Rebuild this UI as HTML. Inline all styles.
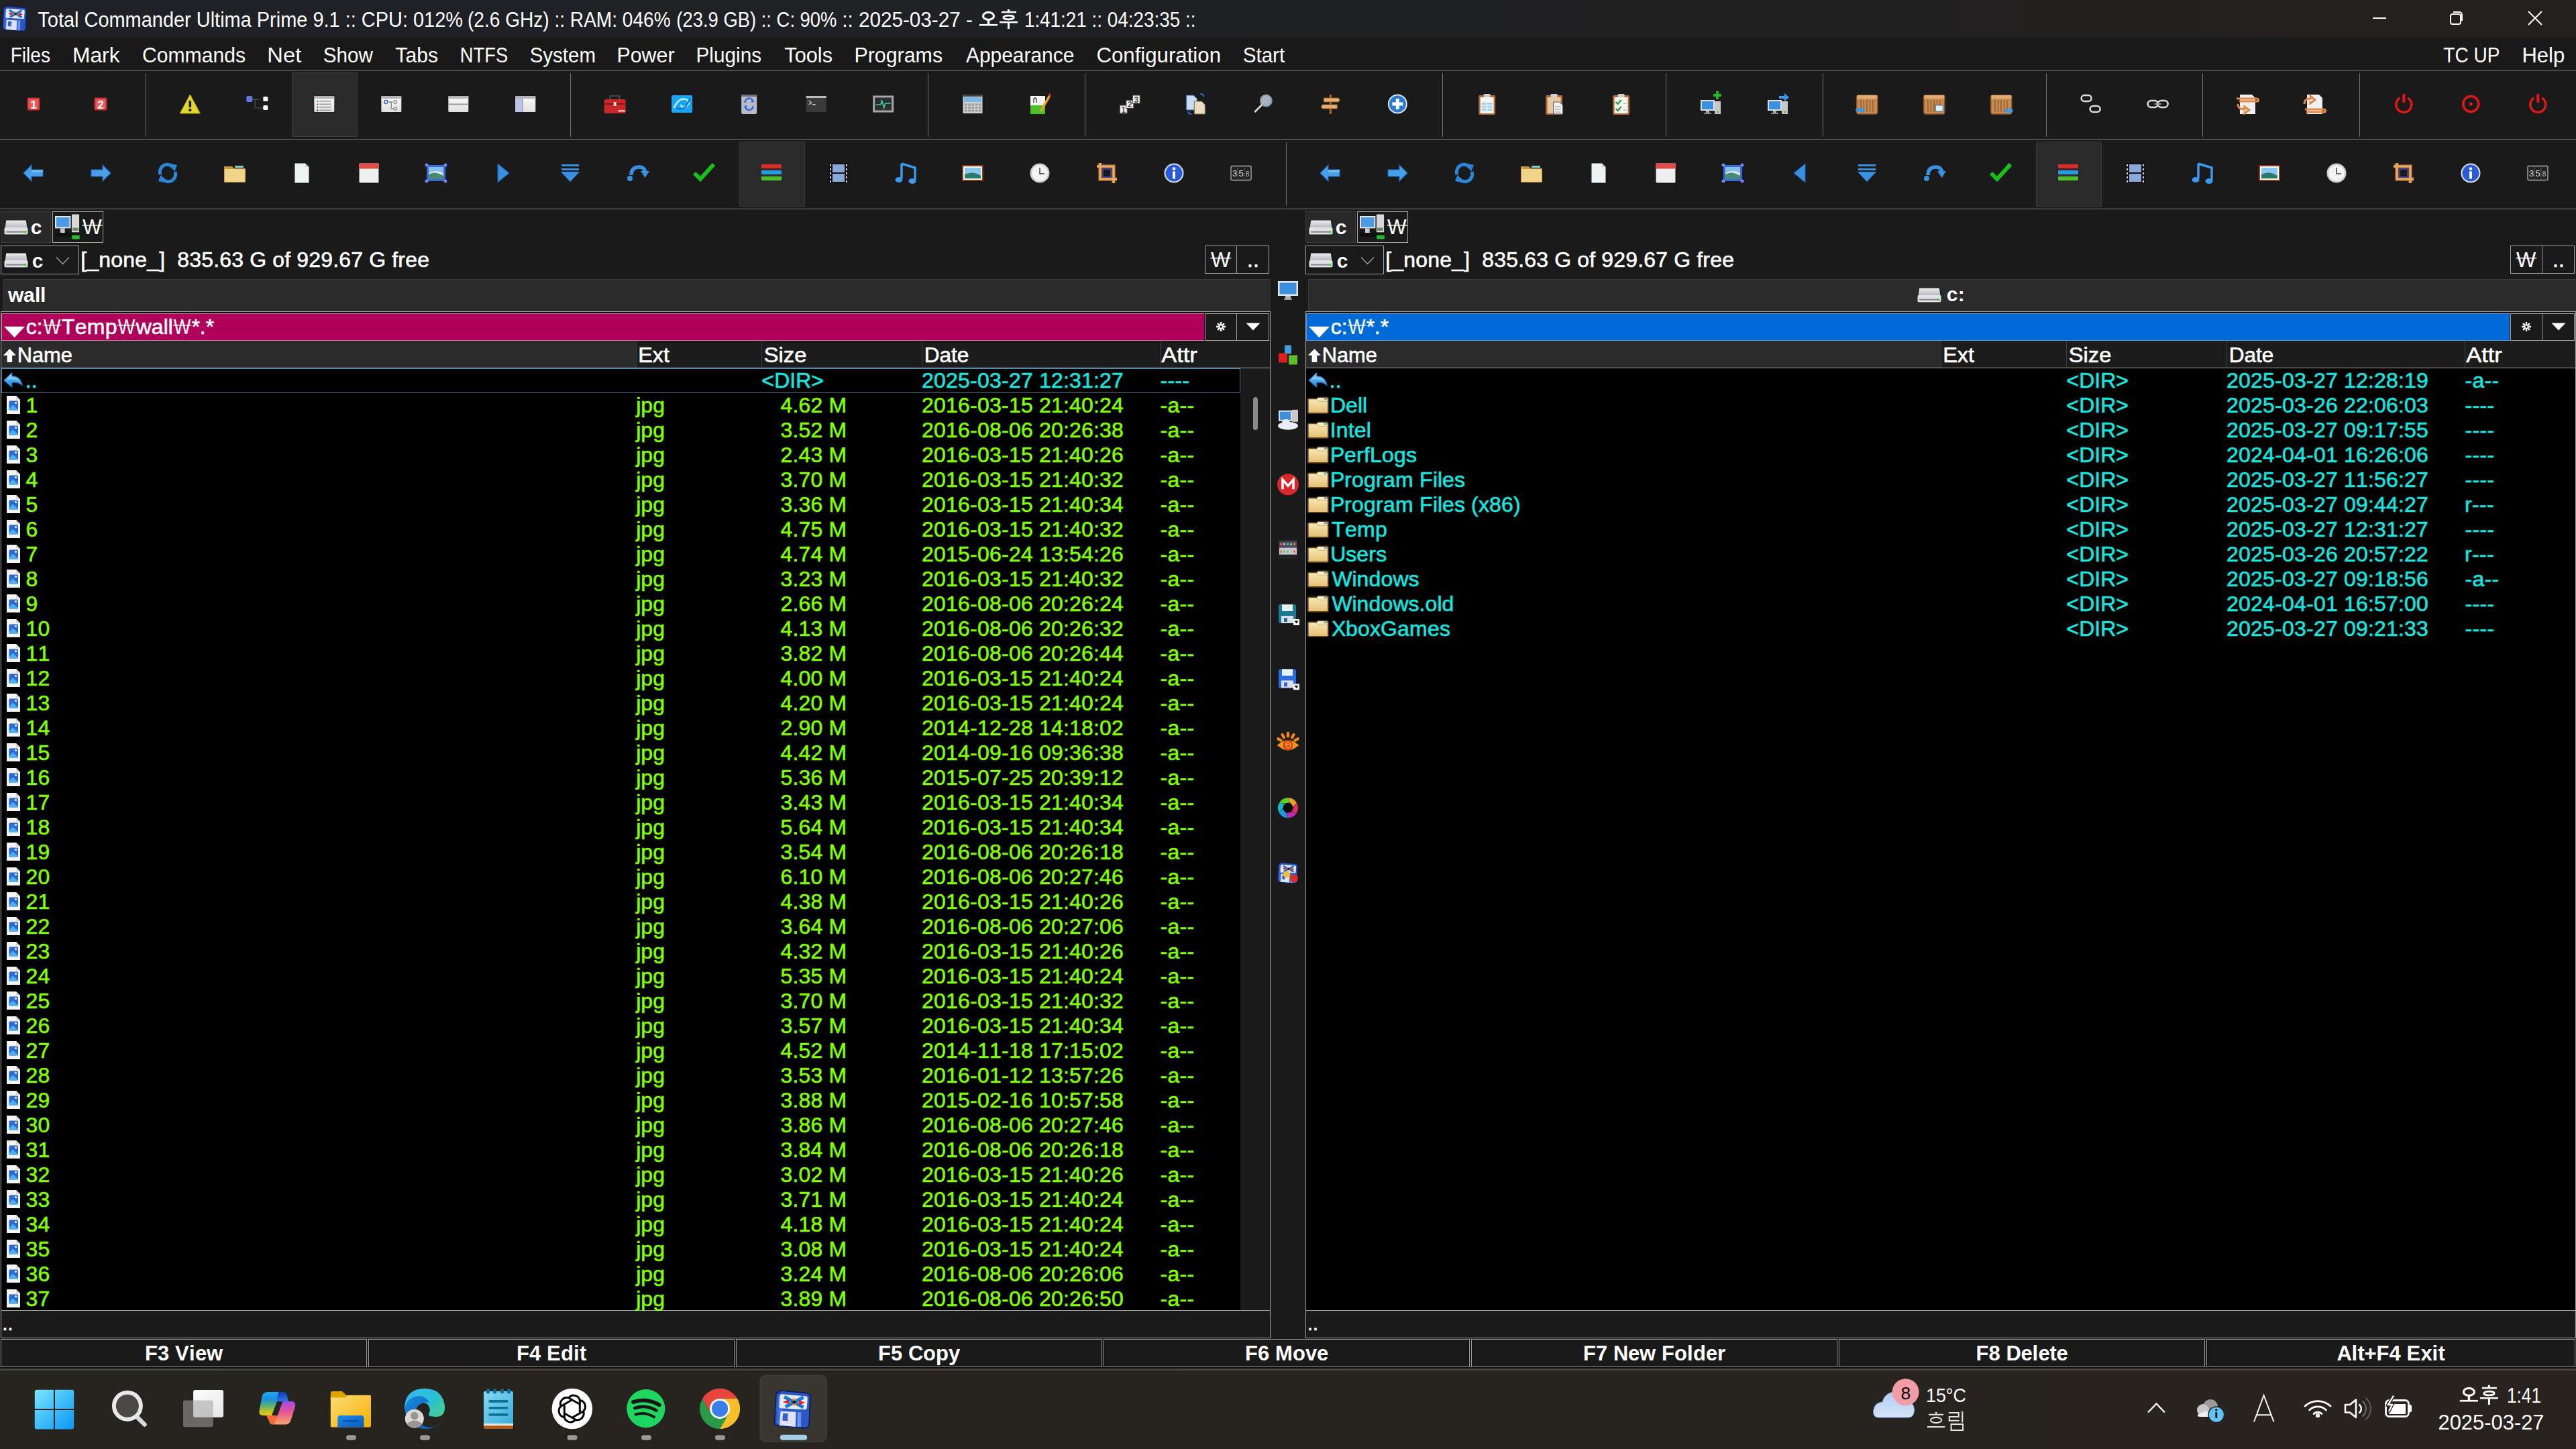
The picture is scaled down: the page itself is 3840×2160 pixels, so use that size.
<!DOCTYPE html><html><head><meta charset="utf-8"><style>html,body{margin:0;padding:0;background:#1a1a1a;overflow:hidden}svg{display:block}text{white-space:pre}</style></head><body>
<svg width="3840" height="2160" viewBox="0 0 3840 2160" shape-rendering="auto">
<defs>
<linearGradient id="tbg" x1="0" x2="1" y1="0" y2="0">
<stop offset="0" stop-color="#1f2127"/><stop offset="0.55" stop-color="#1f2022"/><stop offset="1" stop-color="#24201d"/></linearGradient>
<linearGradient id="fldg" x1="0" x2="0" y1="0" y2="1"><stop offset="0" stop-color="#f8e8b4"/><stop offset="1" stop-color="#e6c078"/></linearGradient>
<linearGradient id="upg" x1="0" x2="0" y1="0" y2="1"><stop offset="0" stop-color="#7acaf6"/><stop offset="1" stop-color="#1a86dc"/></linearGradient>
<linearGradient id="drvg" x1="0" x2="0" y1="0" y2="1"><stop offset="0" stop-color="#ececf0"/><stop offset="1" stop-color="#b4b4bc"/></linearGradient>
<linearGradient id="wing2" x1="0" x2="0" y1="0" y2="1"><stop offset="0" stop-color="#fbfbfb"/><stop offset="1" stop-color="#e0e0e0"/></linearGradient>
<linearGradient id="taskg" x1="0" x2="1" y1="0" y2="0">
<stop offset="0" stop-color="#26241f"/><stop offset="1" stop-color="#28231f"/></linearGradient>
</defs>
<rect x="0" y="0" width="3840" height="2160" fill="#1a1a1a" />
<rect x="0" y="0" width="3840" height="56" fill="url(#tbg)" />
<g transform="translate(3,9) scale(1.0555555555555556)"><path d="M5 1.5 Q5.5 0 8 0.3 L31 2.5 Q34.5 3 34.5 6.5 L33.5 31 Q33.3 35 29.5 35.5 L4.5 33.5 Q0.5 33 0.8 29 L2 5 Q2.3 1.5 5 1.5 Z" fill="#2c56c4" stroke="#0e1e58" stroke-width="1.2"/><path d="M4 6 L3 29 Q3 31 5 31.5 L8 32 L9 5 Z" fill="#4a7ae8" opacity=".6"/><path d="M8 3.5 L30.5 5.5 Q32 5.7 31.9 7.5 L31.3 16.5 Q31.2 18 29.5 18 L6.5 16.8 Q5 16.7 5.1 15 L5.7 5.5 Q5.8 3.4 8 3.5 Z" fill="#e6eaf6"/><path d="M10 6 L28 16 M28 6.5 L11 15.5" stroke="#1e78dc" stroke-width="3.2"/><path d="M8.5 11 L14 8.5 L15 13 Z M29.5 11.5 L24 14 L23.5 9 Z" fill="#dc2424"/><path d="M17 7.5 L21.5 7.8 L20 11 L22 14.5 L17.5 14.3 L18.8 11 Z" fill="#f2a020"/><circle cx="19.3" cy="11" r="1.6" fill="#181818"/><path d="M6.5 19.5 L21 20.3 L20.5 34.3 L5.3 33 Z" fill="#dce2f8"/><path d="M8.7 21.5 L13.5 21.8 L13 28.8 L8.2 28.4 Z" fill="#3460d0"/><path d="M22.5 20.4 L26 20.6 L25.6 34.6 L22 34.4 Z" fill="#6a94f2"/></g>
<text x="56.35" y="40" font-family="Liberation Sans" font-size="31" font-weight="normal" fill="#fff" text-anchor="start" textLength="633.67" lengthAdjust="spacingAndGlyphs" >Total Commander Ultima Prime 9.1 :: CPU: 012%</text>
<text x="696.96" y="40" font-family="Liberation Sans" font-size="31" font-weight="normal" fill="#fff" text-anchor="start" textLength="302.74" lengthAdjust="spacingAndGlyphs" >(2.6 GHz) :: RAM: 046%</text>
<text x="1008.3" y="40" font-family="Liberation Sans" font-size="31" font-weight="normal" fill="#fff" text-anchor="start" textLength="239.18" lengthAdjust="spacingAndGlyphs" >(23.9 GB) :: C: 90%</text>
<text x="1255.19" y="40" font-family="Liberation Sans" font-size="31" font-weight="normal" fill="#fff" text-anchor="start" textLength="194.73" lengthAdjust="spacingAndGlyphs" >:: 2025-03-27 -</text>
<g transform="translate(1459.9,13.8)"><ellipse cx="13.6" cy="10.1" rx="8.0" ry="5.5" fill="none" stroke="#fff" stroke-width="3.1"/><rect x="11.9" y="15.5" width="3.4" height="7" fill="#fff"/><rect x="0" y="22.1" width="27.1" height="2.6" fill="#fff"/><rect x="42" y="0" width="3.2" height="4" fill="#fff"/><rect x="33" y="3" width="22.1" height="2.5" fill="#fff"/><ellipse cx="43.6" cy="12.2" rx="7.9" ry="2.9" fill="none" stroke="#fff" stroke-width="2.6"/><rect x="30.1" y="18" width="27" height="2.6" fill="#fff"/><rect x="42.1" y="19" width="3" height="10.3" fill="#fff"/></g>
<text x="1526.88" y="40" font-family="Liberation Sans" font-size="31" font-weight="normal" fill="#fff" text-anchor="start" textLength="255.67" lengthAdjust="spacingAndGlyphs" >1:41:21 :: 04:23:35 ::</text>
<rect x="3537" y="26" width="20" height="2" fill="#fff" />
<g fill="none" stroke="#fff" stroke-width="2"><rect x="3653" y="21" width="15" height="15" rx="3"/><path d="M3657 18 h9 a4 4 0 0 1 4 4 v9"/></g>
<path d="M3769 17 L3789 37 M3789 17 L3769 37" stroke="#fff" stroke-width="2"/>
<rect x="0" y="56" width="3840" height="48" fill="#191919" />
<text x="15.7" y="93" font-family="Liberation Sans" font-size="31" font-weight="normal" fill="#fff" text-anchor="start" textLength="59.32" lengthAdjust="spacingAndGlyphs" >Files</text>
<text x="108.0" y="93" font-family="Liberation Sans" font-size="31" font-weight="normal" fill="#fff" text-anchor="start" textLength="70.56" lengthAdjust="spacingAndGlyphs" >Mark</text>
<text x="211.97" y="93" font-family="Liberation Sans" font-size="31" font-weight="normal" fill="#fff" text-anchor="start" textLength="154.12" lengthAdjust="spacingAndGlyphs" >Commands</text>
<text x="398.32" y="93" font-family="Liberation Sans" font-size="31" font-weight="normal" fill="#fff" text-anchor="start" textLength="50.92" lengthAdjust="spacingAndGlyphs" >Net</text>
<text x="481.65" y="93" font-family="Liberation Sans" font-size="31" font-weight="normal" fill="#fff" text-anchor="start" textLength="74.28" lengthAdjust="spacingAndGlyphs" >Show</text>
<text x="589.36" y="93" font-family="Liberation Sans" font-size="31" font-weight="normal" fill="#fff" text-anchor="start" textLength="63.68" lengthAdjust="spacingAndGlyphs" >Tabs</text>
<text x="685.75" y="93" font-family="Liberation Sans" font-size="31" font-weight="normal" fill="#fff" text-anchor="start" textLength="71.5" lengthAdjust="spacingAndGlyphs" >NTFS</text>
<text x="789.66" y="93" font-family="Liberation Sans" font-size="31" font-weight="normal" fill="#fff" text-anchor="start" textLength="98.28" lengthAdjust="spacingAndGlyphs" >System</text>
<text x="919.51" y="93" font-family="Liberation Sans" font-size="31" font-weight="normal" fill="#fff" text-anchor="start" textLength="85.99" lengthAdjust="spacingAndGlyphs" >Power</text>
<text x="1037.56" y="93" font-family="Liberation Sans" font-size="31" font-weight="normal" fill="#fff" text-anchor="start" textLength="97.51" lengthAdjust="spacingAndGlyphs" >Plugins</text>
<text x="1169.34" y="93" font-family="Liberation Sans" font-size="31" font-weight="normal" fill="#fff" text-anchor="start" textLength="71.72" lengthAdjust="spacingAndGlyphs" >Tools</text>
<text x="1273.51" y="93" font-family="Liberation Sans" font-size="31" font-weight="normal" fill="#fff" text-anchor="start" textLength="131.59" lengthAdjust="spacingAndGlyphs" >Programs</text>
<text x="1439.94" y="93" font-family="Liberation Sans" font-size="31" font-weight="normal" fill="#fff" text-anchor="start" textLength="161.39" lengthAdjust="spacingAndGlyphs" >Appearance</text>
<text x="1634.42" y="93" font-family="Liberation Sans" font-size="31" font-weight="normal" fill="#fff" text-anchor="start" textLength="185.61" lengthAdjust="spacingAndGlyphs" >Configuration</text>
<text x="1852.65" y="93" font-family="Liberation Sans" font-size="31" font-weight="normal" fill="#fff" text-anchor="start" textLength="62.56" lengthAdjust="spacingAndGlyphs" >Start</text>
<text x="3642.37" y="93" font-family="Liberation Sans" font-size="31" font-weight="normal" fill="#fff" text-anchor="start" textLength="84.11" lengthAdjust="spacingAndGlyphs" >TC UP</text>
<text x="3759.45" y="93" font-family="Liberation Sans" font-size="31" font-weight="normal" fill="#fff" text-anchor="start" textLength="63.85" lengthAdjust="spacingAndGlyphs" >Help</text>
<rect x="0" y="103" width="3840" height="1" fill="#0f0f0f"/>
<rect x="0" y="104" width="3840" height="1" fill="#9a9a9a"/>
<rect x="0" y="105" width="3840" height="1" fill="#0f0f0f"/>
<g transform="translate(50.0,155)"><rect x="-9.5" y="-9.5" width="19" height="19" rx="2" fill="#c42a2e"/><rect x="-7.5" y="-7.5" width="15" height="15" rx="1" fill="#ea5a5c"/><text x="0" y="6.5" font-family="Liberation Sans" font-weight="bold" font-size="17" fill="#fff" text-anchor="middle">1</text></g>
<g transform="translate(150.0,155)"><rect x="-9.5" y="-9.5" width="19" height="19" rx="2" fill="#c42a2e"/><rect x="-7.5" y="-7.5" width="15" height="15" rx="1" fill="#ea5a5c"/><text x="0" y="6.5" font-family="Liberation Sans" font-weight="bold" font-size="17" fill="#fff" text-anchor="middle">2</text></g>
<rect x="217" y="109" width="1" height="95" fill="#6e6e6e"/>
<g transform="translate(283.33,155)"><path d="M0 -14 L15 14 H-15 Z" fill="#e4d62a" stroke="#b8a818" stroke-width="1"/><rect x="-1.8" y="-5" width="3.6" height="10" fill="#222"/><circle cx="0" cy="9" r="2.2" fill="#222"/></g>
<g transform="translate(383.33,155)"><path d="M-10 -7 H4 M-3 -7 V6 H10" stroke="#3a3a3a" stroke-width="2" fill="none"/><rect x="-16" y="-12" width="9" height="9" rx="2" fill="#5a7ae0"/><rect x="9" y="-11" width="7" height="7" rx="1.5" fill="#fff"/><rect x="9" y="2" width="7" height="7" rx="1.5" fill="#fff"/></g>
<rect x="435.5" y="107.5" width="97" height="96" fill="#2a2a2a" stroke="#3a3a3a" stroke-width="1"/>
<g transform="translate(483.33,155)"><rect x="-15.5" y="-12.5" width="31" height="25" rx="2" fill="#111"/><rect x="-15" y="-12" width="30" height="24" rx="1.5" fill="url(#wing2)"/><rect x="-15" y="-12" width="30" height="4" rx="1" fill="#b4b4b4"/><rect x="-11" y="-5.0" width="2" height="2" fill="#2a9a2a"/><rect x="-7" y="-5.0" width="17" height="1.6" fill="#9a9a9a"/><rect x="-11" y="-0.5" width="2" height="2" fill="#c03030"/><rect x="-7" y="-0.5" width="17" height="1.6" fill="#9a9a9a"/><rect x="-11" y="4.0" width="2" height="2" fill="#3a6ad0"/><rect x="-7" y="4.0" width="17" height="1.6" fill="#9a9a9a"/><rect x="-11" y="8.5" width="2" height="2" fill="#333"/><rect x="-7" y="8.5" width="17" height="1.6" fill="#9a9a9a"/></g>
<g transform="translate(583.3299999999999,155)"><rect x="-15.5" y="-12.5" width="31" height="25" rx="2" fill="#111"/><rect x="-15" y="-12" width="30" height="24" rx="1.5" fill="url(#wing2)"/><rect x="-15" y="-12" width="30" height="4" rx="1" fill="#b4b4b4"/><circle cx="-8" cy="-3" r="2.5" fill="none" stroke="#3a6ad0" stroke-width="1.5"/><path d="M-4 -3 H2 M0 -3 V7 H4" stroke="#888" stroke-width="1.3" fill="none"/><circle cx="6" cy="-3" r="2.3" fill="none" stroke="#888" stroke-width="1.3"/><circle cx="6" cy="7" r="2.3" fill="none" stroke="#888" stroke-width="1.3"/></g>
<g transform="translate(683.3299999999999,155)"><rect x="-15.5" y="-12.5" width="31" height="25" rx="2" fill="#111"/><rect x="-15" y="-12" width="30" height="24" rx="1.5" fill="url(#wing2)"/><rect x="-15" y="-12" width="30" height="4" rx="1" fill="#b4b4b4"/><rect x="-15" y="-0.5" width="30" height="2" fill="#9a9a9a"/></g>
<g transform="translate(783.3299999999999,155)"><rect x="-15.5" y="-12.5" width="31" height="25" rx="2" fill="#111"/><rect x="-15" y="-12" width="30" height="24" rx="1.5" fill="url(#wing2)"/><rect x="-15" y="-12" width="30" height="4" rx="1" fill="#b4b4b4"/><rect x="-15" y="-8" width="10" height="20" fill="#b8c4e8"/><rect x="-5" y="-8" width="1.5" height="20" fill="#9a9a9a"/></g>
<rect x="850" y="109" width="1" height="95" fill="#6e6e6e"/>
<g transform="translate(916.66,155)"><path d="M-7 -7 V-12 H7 V-7" fill="none" stroke="#444" stroke-width="2.5"/><rect x="-16" y="-7" width="32" height="21" rx="2" fill="#c8282a"/><rect x="-16" y="-1" width="32" height="2" fill="#8a1818"/><rect x="-2" y="-3" width="4" height="6" fill="#ddd"/><rect x="5" y="9" width="10" height="2.5" fill="#fff" opacity=".7"/></g>
<g transform="translate(1016.66,155)"><rect x="-15.5" y="-13" width="31" height="26" rx="2" fill="#1aa4f4"/><path d="M-12 6 Q-4 -12 8 -6 Q14 0 4 4 Q-2 6 -1 1" fill="none" stroke="#c8f0ff" stroke-width="2.5"/><path d="M12 -8 Q4 12 -8 6" fill="none" stroke="#0a6ad0" stroke-width="2"/></g>
<g transform="translate(1116.6599999999999,155)"><rect x="-11.5" y="-14" width="23" height="29" rx="2" fill="#b8bcc8"/><rect x="-11.5" y="-14" width="23" height="3" fill="#6a6e7a"/><path d="M-6 -2 A6 6 0 0 1 6 -3 M6 3 A6 6 0 0 1 -6 3" fill="none" stroke="#3a6ae0" stroke-width="2.5"/><path d="M4 -7 l4 4 l-5 1 z M-4 7 l-4 -4 l5 -1 z" fill="#3a6ae0"/></g>
<g transform="translate(1216.6599999999999,155)"><rect x="-15" y="-12" width="30" height="24" fill="#3a3a3a"/><rect x="-15" y="-12" width="30" height="3" fill="#bbb"/><path d="M-11 -5 l4 3 l-4 3" fill="none" stroke="#ccc" stroke-width="1.4"/><rect x="-6" y="0" width="5" height="1.5" fill="#ccc"/></g>
<g transform="translate(1316.6599999999999,155)"><rect x="-15.5" y="-12.5" width="31" height="25" fill="#a8a8a8"/><rect x="-12.5" y="-9.5" width="25" height="19" fill="#2a2e30"/><path d="M-11 1 H-4 L-2 -5 L1 6 L3 -1 H11" fill="none" stroke="#3ad0a0" stroke-width="1.6"/></g>
<rect x="1383" y="109" width="1" height="95" fill="#6e6e6e"/>
<g transform="translate(1449.9899999999998,155)"><rect x="-14.5" y="-14" width="29" height="28" fill="#d0d0d0"/><rect x="-14.5" y="-14" width="29" height="3" fill="#444"/><rect x="-13" y="-10" width="26" height="7" fill="#7ab8e8"/><rect x="-12.0" y="-0.5" width="3.6" height="3" fill="#9a9a9a"/><rect x="-6.8" y="-0.5" width="3.6" height="3" fill="#9a9a9a"/><rect x="-1.5999999999999996" y="-0.5" width="3.6" height="3" fill="#9a9a9a"/><rect x="3.6000000000000014" y="-0.5" width="3.6" height="3" fill="#9a9a9a"/><rect x="8.8" y="-0.5" width="3.6" height="3" fill="#9a9a9a"/><rect x="-12.0" y="4.0" width="3.6" height="3" fill="#9a9a9a"/><rect x="-6.8" y="4.0" width="3.6" height="3" fill="#9a9a9a"/><rect x="-1.5999999999999996" y="4.0" width="3.6" height="3" fill="#9a9a9a"/><rect x="3.6000000000000014" y="4.0" width="3.6" height="3" fill="#9a9a9a"/><rect x="8.8" y="4.0" width="3.6" height="3" fill="#9a9a9a"/><rect x="-12.0" y="8.5" width="3.6" height="3" fill="#9a9a9a"/><rect x="-6.8" y="8.5" width="3.6" height="3" fill="#9a9a9a"/><rect x="-1.5999999999999996" y="8.5" width="3.6" height="3" fill="#9a9a9a"/><rect x="3.6000000000000014" y="8.5" width="3.6" height="3" fill="#9a9a9a"/><rect x="8.8" y="8.5" width="3.6" height="3" fill="#9a9a9a"/></g>
<g transform="translate(1549.9899999999998,155)"><path d="M-14 -12 H8 V15 H-14 Z" fill="#f4f4f4"/><path d="M-14 2 H8 V15 H-14 Z" fill="#4ac02a"/><path d="M-9 -2 V-8 Q-7 -10 -5 -8 V-2" fill="none" stroke="#333" stroke-width="1.3"/><path d="M0 10 L13 -13 L16 -11 L3 12 Z" fill="#e8a020"/><path d="M13 -13 L16 -11 L17 -14 L14 -16 Z" fill="#d03030"/></g>
<rect x="1617" y="109" width="1" height="95" fill="#6e6e6e"/>
<g transform="translate(1683.3199999999997,155)"><rect x="-14.0" y="2.0" width="11" height="12" fill="#f0f0f0" stroke="#444" stroke-width="1"/><text x="-8.5" y="12.5" font-family="Liberation Sans" font-size="12" font-weight="bold" fill="#555" text-anchor="middle">1</text><rect x="-4.5" y="-5.5" width="11" height="12" fill="#f0f0f0" stroke="#444" stroke-width="1"/><text x="1.0" y="5.0" font-family="Liberation Sans" font-size="12" font-weight="bold" fill="#555" text-anchor="middle">2</text><rect x="5.0" y="-13.0" width="11" height="12" fill="#f0f0f0" stroke="#444" stroke-width="1"/><text x="10.5" y="-2.5" font-family="Liberation Sans" font-size="12" font-weight="bold" fill="#555" text-anchor="middle">3</text></g>
<g transform="translate(1783.3199999999997,155)"><path d="M-15 -13 H-4 L1 -8 V9 H-15 Z" fill="#c8dcf4" stroke="#3a5aa0" stroke-width="1"/><path d="M-3 -4 H8 L13 1 V15 H-3 Z" fill="#e8dcc4" stroke="#8a6a3a" stroke-width="1"/><path d="M6 -15 Q11 -15 11 -11" fill="none" stroke="#3a6ae0" stroke-width="2"/><path d="M-12 11 Q-12 15 -7 15" fill="none" stroke="#3a6ae0" stroke-width="2"/></g>
<g transform="translate(1883.3199999999997,155)"><circle cx="4" cy="-5" r="8.5" fill="#a8b4c4" stroke="#8a94a0" stroke-width="2"/><path d="M-2 1 L-13 12" stroke="#ddd" stroke-width="2.5"/></g>
<g transform="translate(1983.3199999999997,155)"><rect x="-1.5" y="-14" width="3" height="29" fill="#a86a2a"/><path d="M-10 -9 H12 L14 -6 L12 -3 H-10 Z" fill="#e8b070" stroke="#8a5a20" stroke-width="1"/><path d="M10 1 H-12 L-14 4 L-12 7 H10 Z" fill="#e8b070" stroke="#8a5a20" stroke-width="1"/></g>
<g transform="translate(2083.3199999999997,155)"><circle r="14.5" fill="#d8e4f0"/><circle r="12.5" fill="#2a7ad0"/><rect x="-8" y="-2.5" width="16" height="5" fill="#fff"/><rect x="-2.5" y="-8" width="5" height="16" fill="#fff"/></g>
<rect x="2150" y="109" width="1" height="95" fill="#6e6e6e"/>
<g transform="translate(2216.6499999999996,155)"><rect x="-12.5" y="-13" width="25" height="29" rx="2" fill="#b06a30"/><rect x="-10" y="-10" width="20" height="24" fill="#f4f4f4"/><rect x="-5" y="-15" width="10" height="5" rx="1" fill="#ccc"/><rect x="-8" y="-2" width="16" height="12" fill="#a8d0f0"/><path d="M-8 2 H8 M-8 6 H8 M0 -2 V10" stroke="#fff" stroke-width="1"/></g>
<g transform="translate(2316.6499999999996,155)"><rect x="-12.5" y="-13" width="25" height="29" rx="2" fill="#b06a30"/><rect x="-10" y="-10" width="20" height="24" fill="#e8c8a0"/><rect x="-5" y="-15" width="10" height="5" rx="1" fill="#ccc"/><path d="M-1 -3 H8 L13 2 V15 H-1 Z" fill="#f4f4f4" stroke="#555" stroke-width="1"/><path d="M1 4 H10 M1 8 H10 M1 12 H10" stroke="#888" stroke-width="1"/></g>
<g transform="translate(2416.6499999999996,155)"><rect x="-12.5" y="-13" width="25" height="29" rx="2" fill="#b06a30"/><rect x="-10" y="-10" width="20" height="24" fill="#f4f4f4"/><rect x="-5" y="-15" width="10" height="5" rx="1" fill="#ccc"/><path d="M-8 -3 l3 3 l5 -6 M-8 7 l3 3 l5 -6" fill="none" stroke="#2aa02a" stroke-width="2.2"/><path d="M3 -1 H8 M3 9 H8" stroke="#999" stroke-width="1"/></g>
<rect x="2483" y="109" width="1" height="95" fill="#6e6e6e"/>
<g transform="translate(2549.9799999999996,155)"><g transform="scale(1.0)"><rect x="-15" y="-6" width="21" height="16" fill="#e0e0e0"/><rect x="-13" y="-4" width="17" height="12" fill="#3a90e0"/><rect x="-7" y="10" width="5" height="3" fill="#aaa"/><rect x="-10" y="13" width="11" height="2" fill="#888"/><rect x="6" y="-4" width="9" height="19" fill="#c8c8c8"/><rect x="9" y="11" width="3" height="2" fill="#3ac03a"/><rect x="4" y="-15" width="12" height="4" fill="#2ab02a"/><rect x="8" y="-19" width="4" height="12" fill="#2ab02a"/></g></g>
<g transform="translate(2649.9799999999996,155)"><g transform="scale(1.0)"><rect x="-15" y="-6" width="21" height="16" fill="#e0e0e0"/><rect x="-13" y="-4" width="17" height="12" fill="#3a90e0"/><rect x="-7" y="10" width="5" height="3" fill="#aaa"/><rect x="-10" y="13" width="11" height="2" fill="#888"/><rect x="6" y="-4" width="9" height="19" fill="#c8c8c8"/><rect x="9" y="11" width="3" height="2" fill="#3ac03a"/><path d="M2 -12 H10 V-16 L17 -10 L10 -4 V-8 H2 Z" fill="#3a9af0"/></g></g>
<rect x="2717" y="109" width="1" height="95" fill="#6e6e6e"/>
<g transform="translate(2783.3099999999995,155)"><rect x="-15.5" y="-13" width="31" height="28" rx="3" fill="#c88a50" stroke="#8a5a28" stroke-width="1.5"/><rect x="-15" y="-13" width="30" height="5" fill="#e0aa70"/><rect x="-10.0" y="-6" width="1.3" height="18" fill="#8a5a28"/><rect x="-5.5" y="-6" width="1.3" height="18" fill="#8a5a28"/><rect x="-1.0" y="-6" width="1.3" height="18" fill="#8a5a28"/><rect x="3.5" y="-6" width="1.3" height="18" fill="#8a5a28"/><rect x="8.0" y="-6" width="1.3" height="18" fill="#8a5a28"/><path d="M-17 7 H-9 V3 L-3 9 L-9 15 V11 H-17 Z" fill="#3a9af0"/></g>
<g transform="translate(2883.3099999999995,155)"><rect x="-15.5" y="-13" width="31" height="28" rx="3" fill="#c88a50" stroke="#8a5a28" stroke-width="1.5"/><rect x="-15" y="-13" width="30" height="5" fill="#e0aa70"/><rect x="-10.0" y="-6" width="1.3" height="18" fill="#8a5a28"/><rect x="-5.5" y="-6" width="1.3" height="18" fill="#8a5a28"/><rect x="-1.0" y="-6" width="1.3" height="18" fill="#8a5a28"/><rect x="3.5" y="-6" width="1.3" height="18" fill="#8a5a28"/><rect x="8.0" y="-6" width="1.3" height="18" fill="#8a5a28"/><rect x="2" y="2" width="11" height="9" fill="#dff0ff" stroke="#3a7ad0" stroke-width="1"/></g>
<g transform="translate(2983.3099999999995,155)"><rect x="-15.5" y="-13" width="31" height="28" rx="3" fill="#c88a50" stroke="#8a5a28" stroke-width="1.5"/><rect x="-15" y="-13" width="30" height="5" fill="#e0aa70"/><rect x="-10.0" y="-6" width="1.3" height="18" fill="#8a5a28"/><rect x="-5.5" y="-6" width="1.3" height="18" fill="#8a5a28"/><rect x="-1.0" y="-6" width="1.3" height="18" fill="#8a5a28"/><rect x="3.5" y="-6" width="1.3" height="18" fill="#8a5a28"/><rect x="8.0" y="-6" width="1.3" height="18" fill="#8a5a28"/><path d="M4 8 H12 V4 L18 10 L12 16 V12 H4 Z" fill="#3a9af0"/></g>
<rect x="3050" y="109" width="1" height="95" fill="#6e6e6e"/>
<g transform="translate(3116.6399999999994,155)"><rect x="-14" y="-13" width="15" height="9" rx="4.5" fill="none" stroke="#ddd" stroke-width="2.5"/><rect x="-1" y="3" width="15" height="9" rx="4.5" fill="none" stroke="#ddd" stroke-width="2.5"/></g>
<g transform="translate(3216.6399999999994,155)"><rect x="-15" y="-5" width="15" height="10" rx="5" fill="none" stroke="#ddd" stroke-width="2.5"/><rect x="0" y="-5" width="15" height="10" rx="5" fill="none" stroke="#ddd" stroke-width="2.5"/><rect x="-5" y="-1" width="10" height="2" fill="#999"/></g>
<rect x="3283" y="109" width="1" height="95" fill="#6e6e6e"/>
<g transform="translate(3349.9699999999993,155)"><path d="M-11 -14 H7 L12 -9 V15 H-11 Z" fill="#f0f0f0"/><path d="M-16 -8 H14 Q18 -8 16 -4 H-12" fill="none" stroke="#e0884a" stroke-width="3"/><path d="M-14 0 Q-14 8 -4 8 V4 L3 9 L-4 14 V11" fill="none" stroke="#e0884a" stroke-width="3"/></g>
<g transform="translate(3449.9699999999993,155)"><path d="M-11 -14 H7 L12 -9 V15 H-11 Z" fill="#f0f0f0"/><path d="M-15 0 Q-15 -8 -6 -8 V-12 L1 -6 L-6 -1 V-4" fill="none" stroke="#e0884a" stroke-width="3"/><path d="M-14 8 H14 Q18 8 16 12 H-12" fill="none" stroke="#e0884a" stroke-width="3"/></g>
<rect x="3517" y="109" width="1" height="95" fill="#6e6e6e"/>
<g transform="translate(3583.2999999999993,155)"><path d="M-6 -9 A11.5 11.5 0 1 0 6 -9" fill="none" stroke="#e01818" stroke-width="3.5"/><rect x="-2" y="-15" width="4" height="13" fill="#e01818"/></g>
<g transform="translate(3683.2999999999993,155)"><circle r="11.5" fill="none" stroke="#e01818" stroke-width="3.5"/><circle r="2.5" fill="#e01818"/></g>
<g transform="translate(3783.2999999999993,155)"><path d="M-6 -9 A11.5 11.5 0 1 0 6 -9" fill="none" stroke="#e01818" stroke-width="3.5"/><rect x="-2" y="-15" width="4" height="13" fill="#e01818"/></g>
<rect x="0" y="207" width="3840" height="1" fill="#0f0f0f"/>
<rect x="0" y="208" width="3840" height="1" fill="#9a9a9a"/>
<rect x="0" y="209" width="3840" height="1" fill="#0f0f0f"/>
<rect x="1102.5" y="211.5" width="97" height="96" fill="#2a2a2a" stroke="#3a3a3a" stroke-width="1"/>
<g transform="translate(50,258)"><path d="M-15 0 L-3 -12 V-5 H14 V5 H-3 V12 Z" fill="#4aa0e8" stroke="#1a6ab8" stroke-width="1.2"/><path d="M-3 -5 H14 V-1 H-3 Z" fill="#8ac8f8" opacity=".6"/></g>
<g transform="translate(150,258)"><g transform="scale(-1,1)"><path d="M-15 0 L-3 -12 V-5 H14 V5 H-3 V12 Z" fill="#4aa0e8" stroke="#1a6ab8" stroke-width="1.2"/></g></g>
<g transform="translate(250,258)"><path d="M-11 2 A11 11 0 0 1 9 -7" fill="none" stroke="#2a86d8" stroke-width="5"/><path d="M4 -14 L14 -12 L10 -2 Z" fill="#2a86d8"/><path d="M11 -2 A11 11 0 0 1 -9 7" fill="none" stroke="#2a86d8" stroke-width="5"/><path d="M-4 14 L-14 12 L-10 2 Z" fill="#2a86d8"/></g>
<g transform="translate(350,258)"><path d="M-16 -10 H-4 L-1 -7 H16 V14 H-16 Z" fill="#c89a40"/><rect x="-15" y="-6" width="30" height="19" rx="1" fill="#f0d48a"/><rect x="0" y="-11" width="13" height="3" fill="#7ad0c8"/></g>
<g transform="translate(450,258)"><path d="M-10.5 -14.5 H5 L10.5 -9 V14.5 H-10.5 Z" fill="#eef4f4"/><path d="M5 -14.5 V-9 H10.5" fill="#c8d0d0"/></g>
<g transform="translate(550,258)"><rect x="-14.5" y="-14.5" width="29" height="29" rx="1.5" fill="#f0f0f0" stroke="#8a7a70" stroke-width="1"/><rect x="-14.5" y="-14.5" width="29" height="8" fill="#e04a4a"/></g>
<g transform="translate(650,258)"><rect x="-14" y="-12" width="28" height="24" fill="#3a6ae0"/><rect x="-11" y="-9" width="22" height="18" fill="#d8e8f0"/><path d="M-11 9 V2 Q-2 -4 11 4 V9 Z" fill="#4a8a70"/><path d="M-11 -9 H11 V0 Q0 -6 -11 0 Z" fill="#8ac0e8"/><circle cx="-14" cy="-12" r="2.5" fill="#6a8af0"/><circle cx="14" cy="-12" r="2.5" fill="#6a8af0"/><circle cx="-14" cy="12" r="2.5" fill="#6a8af0"/><circle cx="14" cy="12" r="2.5" fill="#6a8af0"/></g>
<g transform="translate(750,258)"><path d="M-8 -14 L9 0 L-8 14 Z" fill="#3a90e0" stroke="#1a5aa8" stroke-width="1"/></g>
<g transform="translate(850,258)"><rect x="-13" y="-13" width="26" height="3" fill="#3a90e0"/><rect x="-13" y="-7" width="26" height="3" fill="#3a90e0"/><path d="M-14 -2 H14 L0 13 Z" fill="#3a90e0"/></g>
<g transform="translate(950,258)"><path d="M-9 3 Q-9 -9 3 -9 Q10 -9 12 -2" fill="none" stroke="#3a90e0" stroke-width="5.5"/><path d="M5 -3 L18 -3 L11.5 7 Z" fill="#3a90e0"/><circle cx="-11" cy="8" r="4" fill="#3a90e0"/></g>
<g transform="translate(1050,258)"><path d="M-15 0 L-6 9 L14 -13" fill="none" stroke="#1ac01a" stroke-width="6"/></g>
<g transform="translate(1150,258)"><rect x="-15" y="-13" width="30" height="6" rx="1" fill="#e02a2a"/><rect x="-15" y="-4" width="30" height="6" rx="1" fill="#2a9ae0"/><rect x="-15" y="5" width="30" height="6" rx="1" fill="#4ac02a"/></g>
<g transform="translate(1250,258)"><rect x="-14.5" y="-15" width="29" height="30" fill="#111"/><rect x="-9" y="-13" width="18" height="12" fill="#8aa8d8"/><rect x="-9" y="1" width="18" height="12" fill="#8aa8d8"/><rect x="-13" y="-13" width="2" height="3" fill="#ddd"/><rect x="11" y="-13" width="2" height="3" fill="#ddd"/><rect x="-13" y="-7" width="2" height="3" fill="#ddd"/><rect x="11" y="-7" width="2" height="3" fill="#ddd"/><rect x="-13" y="-1" width="2" height="3" fill="#ddd"/><rect x="11" y="-1" width="2" height="3" fill="#ddd"/><rect x="-13" y="5" width="2" height="3" fill="#ddd"/><rect x="11" y="5" width="2" height="3" fill="#ddd"/><rect x="-13" y="11" width="2" height="3" fill="#ddd"/><rect x="11" y="11" width="2" height="3" fill="#ddd"/></g>
<g transform="translate(1350,258)"><path d="M-6 -14 L14 -8 V10" fill="none" stroke="#3a9af0" stroke-width="3.5"/><path d="M-6 -14 V8" stroke="#3a9af0" stroke-width="3.5"/><ellipse cx="-10" cy="10" rx="5.5" ry="4" fill="#3a9af0"/><ellipse cx="10" cy="12" rx="5.5" ry="4" fill="#3a9af0"/></g>
<g transform="translate(1450,258)"><rect x="-16" y="-12" width="32" height="24" fill="#8a3a10"/><rect x="-14" y="-10" width="28" height="20" fill="#fff"/><rect x="-12" y="-8" width="24" height="16" fill="#8ac8f0"/><path d="M-12 8 V2 Q0 -4 12 4 V8 Z" fill="#2a7a6a"/></g>
<g transform="translate(1550,258)"><circle r="14.5" fill="#c8cccc"/><circle r="12" fill="#f4f4f4"/><path d="M0 -8 V1 H7" fill="none" stroke="#444" stroke-width="1.5"/></g>
<g transform="translate(1650,258)"><path d="M-10 -15 V9 H15 M-15 -10 H10 V15" fill="none" stroke="#7a4a1a" stroke-width="6"/><path d="M-10 -15 V9 H15 M-15 -10 H10 V15" fill="none" stroke="#e8a868" stroke-width="3.5"/><rect x="-6" y="-6" width="12" height="12" fill="none" stroke="#3a4ad0" stroke-width="1.5"/></g>
<g transform="translate(1750,258)"><circle r="14.5" fill="#d8e0f0"/><circle r="12.5" fill="#2a5ad8"/><circle cx="0" cy="-6.5" r="2.3" fill="#fff"/><rect x="-2" y="-2.5" width="4" height="11" fill="#fff"/></g>
<g transform="translate(1850,258)"><rect x="-15" y="-10.5" width="30" height="21" rx="1.5" fill="#222" stroke="#b0b0b0" stroke-width="1.3"/><path d="M-5 -8 V8 M5 -8 V8" stroke="#555" stroke-width="1"/><text x="-9.5" y="5" font-family="Liberation Sans" font-size="13" fill="#ddd" text-anchor="middle" transform="scale(1,1)">3</text><text x="0" y="5" font-family="Liberation Sans" font-size="13" fill="#ddd" text-anchor="middle">5</text><text x="9.5" y="5" font-family="Liberation Sans" font-size="10" fill="#bbb" text-anchor="middle">8</text></g>
<rect x="3035.5" y="211.5" width="97" height="96" fill="#2a2a2a" stroke="#3a3a3a" stroke-width="1"/>
<g transform="translate(1983,258)"><path d="M-15 0 L-3 -12 V-5 H14 V5 H-3 V12 Z" fill="#4aa0e8" stroke="#1a6ab8" stroke-width="1.2"/><path d="M-3 -5 H14 V-1 H-3 Z" fill="#8ac8f8" opacity=".6"/></g>
<g transform="translate(2083,258)"><g transform="scale(-1,1)"><path d="M-15 0 L-3 -12 V-5 H14 V5 H-3 V12 Z" fill="#4aa0e8" stroke="#1a6ab8" stroke-width="1.2"/></g></g>
<g transform="translate(2183,258)"><path d="M-11 2 A11 11 0 0 1 9 -7" fill="none" stroke="#2a86d8" stroke-width="5"/><path d="M4 -14 L14 -12 L10 -2 Z" fill="#2a86d8"/><path d="M11 -2 A11 11 0 0 1 -9 7" fill="none" stroke="#2a86d8" stroke-width="5"/><path d="M-4 14 L-14 12 L-10 2 Z" fill="#2a86d8"/></g>
<g transform="translate(2283,258)"><path d="M-16 -10 H-4 L-1 -7 H16 V14 H-16 Z" fill="#c89a40"/><rect x="-15" y="-6" width="30" height="19" rx="1" fill="#f0d48a"/><rect x="0" y="-11" width="13" height="3" fill="#7ad0c8"/></g>
<g transform="translate(2383,258)"><path d="M-10.5 -14.5 H5 L10.5 -9 V14.5 H-10.5 Z" fill="#eef4f4"/><path d="M5 -14.5 V-9 H10.5" fill="#c8d0d0"/></g>
<g transform="translate(2483,258)"><rect x="-14.5" y="-14.5" width="29" height="29" rx="1.5" fill="#f0f0f0" stroke="#8a7a70" stroke-width="1"/><rect x="-14.5" y="-14.5" width="29" height="8" fill="#e04a4a"/></g>
<g transform="translate(2583,258)"><rect x="-14" y="-12" width="28" height="24" fill="#3a6ae0"/><rect x="-11" y="-9" width="22" height="18" fill="#d8e8f0"/><path d="M-11 9 V2 Q-2 -4 11 4 V9 Z" fill="#4a8a70"/><path d="M-11 -9 H11 V0 Q0 -6 -11 0 Z" fill="#8ac0e8"/><circle cx="-14" cy="-12" r="2.5" fill="#6a8af0"/><circle cx="14" cy="-12" r="2.5" fill="#6a8af0"/><circle cx="-14" cy="12" r="2.5" fill="#6a8af0"/><circle cx="14" cy="12" r="2.5" fill="#6a8af0"/></g>
<g transform="translate(2683,258)"><path d="M8 -14 L-9 0 L8 14 Z" fill="#3a90e0" stroke="#1a5aa8" stroke-width="1"/></g>
<g transform="translate(2783,258)"><rect x="-13" y="-13" width="26" height="3" fill="#3a90e0"/><rect x="-13" y="-7" width="26" height="3" fill="#3a90e0"/><path d="M-14 -2 H14 L0 13 Z" fill="#3a90e0"/></g>
<g transform="translate(2883,258)"><path d="M-9 3 Q-9 -9 3 -9 Q10 -9 12 -2" fill="none" stroke="#3a90e0" stroke-width="5.5"/><path d="M5 -3 L18 -3 L11.5 7 Z" fill="#3a90e0"/><circle cx="-11" cy="8" r="4" fill="#3a90e0"/></g>
<g transform="translate(2983,258)"><path d="M-15 0 L-6 9 L14 -13" fill="none" stroke="#1ac01a" stroke-width="6"/></g>
<g transform="translate(3083,258)"><rect x="-15" y="-13" width="30" height="6" rx="1" fill="#e02a2a"/><rect x="-15" y="-4" width="30" height="6" rx="1" fill="#2a9ae0"/><rect x="-15" y="5" width="30" height="6" rx="1" fill="#4ac02a"/></g>
<g transform="translate(3183,258)"><rect x="-14.5" y="-15" width="29" height="30" fill="#111"/><rect x="-9" y="-13" width="18" height="12" fill="#8aa8d8"/><rect x="-9" y="1" width="18" height="12" fill="#8aa8d8"/><rect x="-13" y="-13" width="2" height="3" fill="#ddd"/><rect x="11" y="-13" width="2" height="3" fill="#ddd"/><rect x="-13" y="-7" width="2" height="3" fill="#ddd"/><rect x="11" y="-7" width="2" height="3" fill="#ddd"/><rect x="-13" y="-1" width="2" height="3" fill="#ddd"/><rect x="11" y="-1" width="2" height="3" fill="#ddd"/><rect x="-13" y="5" width="2" height="3" fill="#ddd"/><rect x="11" y="5" width="2" height="3" fill="#ddd"/><rect x="-13" y="11" width="2" height="3" fill="#ddd"/><rect x="11" y="11" width="2" height="3" fill="#ddd"/></g>
<g transform="translate(3283,258)"><path d="M-6 -14 L14 -8 V10" fill="none" stroke="#3a9af0" stroke-width="3.5"/><path d="M-6 -14 V8" stroke="#3a9af0" stroke-width="3.5"/><ellipse cx="-10" cy="10" rx="5.5" ry="4" fill="#3a9af0"/><ellipse cx="10" cy="12" rx="5.5" ry="4" fill="#3a9af0"/></g>
<g transform="translate(3383,258)"><rect x="-16" y="-12" width="32" height="24" fill="#8a3a10"/><rect x="-14" y="-10" width="28" height="20" fill="#fff"/><rect x="-12" y="-8" width="24" height="16" fill="#8ac8f0"/><path d="M-12 8 V2 Q0 -4 12 4 V8 Z" fill="#2a7a6a"/></g>
<g transform="translate(3483,258)"><circle r="14.5" fill="#c8cccc"/><circle r="12" fill="#f4f4f4"/><path d="M0 -8 V1 H7" fill="none" stroke="#444" stroke-width="1.5"/></g>
<g transform="translate(3583,258)"><path d="M-10 -15 V9 H15 M-15 -10 H10 V15" fill="none" stroke="#7a4a1a" stroke-width="6"/><path d="M-10 -15 V9 H15 M-15 -10 H10 V15" fill="none" stroke="#e8a868" stroke-width="3.5"/><rect x="-6" y="-6" width="12" height="12" fill="none" stroke="#3a4ad0" stroke-width="1.5"/></g>
<g transform="translate(3683,258)"><circle r="14.5" fill="#d8e0f0"/><circle r="12.5" fill="#2a5ad8"/><circle cx="0" cy="-6.5" r="2.3" fill="#fff"/><rect x="-2" y="-2.5" width="4" height="11" fill="#fff"/></g>
<g transform="translate(3783,258)"><rect x="-15" y="-10.5" width="30" height="21" rx="1.5" fill="#222" stroke="#b0b0b0" stroke-width="1.3"/><path d="M-5 -8 V8 M5 -8 V8" stroke="#555" stroke-width="1"/><text x="-9.5" y="5" font-family="Liberation Sans" font-size="13" fill="#ddd" text-anchor="middle" transform="scale(1,1)">3</text><text x="0" y="5" font-family="Liberation Sans" font-size="13" fill="#ddd" text-anchor="middle">5</text><text x="9.5" y="5" font-family="Liberation Sans" font-size="10" fill="#bbb" text-anchor="middle">8</text></g>
<rect x="1917" y="212" width="1" height="95" fill="#6e6e6e"/>
<rect x="0" y="310" width="3840" height="1" fill="#0f0f0f"/>
<rect x="0" y="311" width="3840" height="1" fill="#9a9a9a"/>
<rect x="0" y="312" width="3840" height="1" fill="#0f0f0f"/>
<rect x="1.5" y="315.5" width="74" height="46" fill="#282828" stroke="#3a3a3a" stroke-width="1"/>
<g transform="translate(24,339)"><rect x="-17.5" y="-10" width="35" height="22" rx="3" fill="#0a0a0a" opacity=".35"/><path d="M-14 -10.5 H14 Q15 -10.5 15 -9.5 L16.5 1 H-16.5 L-15 -9.5 Q-15 -10.5 -14 -10.5 Z" fill="url(#drvg)"/><rect x="-17.5" y="0" width="35" height="10.5" rx="2" fill="#e2e2e6"/><rect x="-15" y="5.5" width="30" height="2.2" fill="#8a8a92"/><rect x="12" y="5" width="3.5" height="3.5" fill="#4ad04a"/></g>
<text x="45.83" y="349" font-family="Liberation Sans" font-size="30" font-weight="bold" fill="#fff">c</text>
<rect x="78.5" y="315.5" width="75" height="46" fill="#1a1a1a" stroke="#a0a0a0" stroke-width="1"/>
<g transform="translate(100,338)"><rect x="-18" y="9" width="36" height="6" fill="#0c0c0c" opacity=".8"/><rect x="6.9" y="-18.6" width="11.2" height="26.8" rx="1" fill="#d8d8d8"/><rect x="8" y="1.5" width="9" height="4.5" fill="#6a8a6a"/><rect x="-18" y="-16" width="23.4" height="18.4" fill="#e4e4e4"/><rect x="-16" y="-14" width="19.4" height="14.4" fill="#4a9ae6"/><rect x="-10" y="2.4" width="6.7" height="6.6" fill="#c8c8c8"/><rect x="7.2" y="12.6" width="11.6" height="5.8" rx="1" fill="#22b82a"/></g>
<text x="0" y="0" transform="translate(123.00,349) scale(0.95,1)" font-family="Liberation Sans" font-size="32" font-weight="normal" fill="#fff">W</text>
<rect x="122.50" y="335.08" width="30.19" height="1.44" fill="#fff"/>
<rect x="1.5" y="366.5" width="116" height="42" fill="#1a1a1a" stroke="#a0a0a0" stroke-width="1"/>
<g transform="translate(24,388)"><rect x="-17.5" y="-10" width="35" height="22" rx="3" fill="#0a0a0a" opacity=".35"/><path d="M-14 -10.5 H14 Q15 -10.5 15 -9.5 L16.5 1 H-16.5 L-15 -9.5 Q-15 -10.5 -14 -10.5 Z" fill="url(#drvg)"/><rect x="-17.5" y="0" width="35" height="10.5" rx="2" fill="#e2e2e6"/><rect x="-15" y="5.5" width="30" height="2.2" fill="#8a8a92"/><rect x="12" y="5" width="3.5" height="3.5" fill="#4ad04a"/></g>
<text x="47.83" y="399" font-family="Liberation Sans" font-size="30" font-weight="bold" fill="#fff">c</text>
<path d="M84 383.5 l9.5 10 l9.5 -10" fill="none" stroke="#a0a0a0" stroke-width="1.4"/>
<text x="120.22 129.22 147.22 165.22 183.22 201.22 219.22 237.22 264.22 282.22 300.22 318.22 327.22 345.22 372.22 406.22 424.22 442.22 460.22 478.22 496.22 505.22 523.22 550.22 584.22 593.22 604.22 622.22" y="398" font-family="Liberation Sans" font-size="32" font-weight="normal" fill="#fff" stroke="#fff" stroke-width="0.6">[_none_]835.63Gof929.67Gfree</text>
<rect x="1796.5" y="366.5" width="47" height="41" fill="#1a1a1a" stroke="#a0a0a0" stroke-width="1"/>
<rect x="1843.5" y="366.5" width="48" height="41" fill="#1a1a1a" stroke="#a0a0a0" stroke-width="1"/>
<text x="0" y="0" transform="translate(1805.00,398) scale(0.97,1)" font-family="Liberation Sans" font-size="32" font-weight="normal" fill="#fff">W</text>
<rect x="1804.50" y="384.08" width="30.80" height="1.44" fill="#fff"/>
<text x="1859 1868" y="398" font-family="Liberation Sans" font-size="32" font-weight="normal" fill="#fff" stroke="#fff" stroke-width="0.6">..</text>
<rect x="5" y="416" width="1889" height="48" fill="#2b2b2b" />
<rect x="5" y="416" width="1889" height="1" fill="#3a3a3a"/>
<rect x="5" y="416" width="1" height="48" fill="#3a3a3a"/>
<text x="12.09 35.09 52.09 60.09" y="450" font-family="Liberation Sans" font-size="30" font-weight="bold" fill="#fff">wall</text>
<rect x="1" y="464" width="1893" height="1" fill="#a0a0a0"/>
<rect x="1" y="464" width="1" height="1490" fill="#a0a0a0"/>
<rect x="1893" y="464" width="1" height="1490" fill="#a0a0a0"/>
<rect x="2" y="465" width="1891" height="2" fill="#0c0c0c" />
<rect x="2" y="467" width="1793" height="41" fill="#c2749c" />
<rect x="3" y="468" width="1792" height="39" fill="#b0005a" />
<path d="M6 486.8 h31 l-15.5 16.4 z" fill="#fff"/>
<text x="0" y="0" transform="translate(64.64,498) scale(0.85,1)" font-family="Liberation Sans" font-size="32" font-weight="normal" fill="#fff">W</text>
<rect x="64.14" y="484.08" width="27.17" height="1.44" fill="#fff"/>
<text x="0" y="0" transform="translate(175.64,498) scale(0.85,1)" font-family="Liberation Sans" font-size="32" font-weight="normal" fill="#fff">W</text>
<rect x="175.14" y="484.08" width="27.17" height="1.44" fill="#fff"/>
<text x="0" y="0" transform="translate(258.64,498) scale(0.85,1)" font-family="Liberation Sans" font-size="32" font-weight="normal" fill="#fff">W</text>
<rect x="258.14" y="484.08" width="27.17" height="1.44" fill="#fff"/>
<text x="38.64 54.64 91.64 111.64 129.64 156.64 202.64 225.64 243.64 250.64 285.64 297.64 306.64" y="498" font-family="Liberation Sans" font-size="32" font-weight="normal" fill="#fff" stroke="#fff" stroke-width="0.6">c:Tempwall*.*</text>
<rect x="1796.5" y="467.5" width="47" height="40" fill="#1a1a1a" stroke="#a0a0a0" stroke-width="1"/>
<rect x="1843.5" y="467.5" width="48" height="40" fill="#1a1a1a" stroke="#a0a0a0" stroke-width="1"/>
<path d="M1820.00 494.00 L1820.00 480.00 M1815.05 491.95 L1824.95 482.05 M1813.00 487.00 L1827.00 487.00 M1815.05 482.05 L1824.95 491.95 " stroke="#fff" stroke-width="2.4"/><circle cx="1820" cy="487" r="1.8" fill="#1a1a1a"/>
<path d="M1857.5 481.5 h21 l-10.5 11 z" fill="#fff"/>
<rect x="2" y="508" width="1891" height="40" fill="#1c1c1c" />
<rect x="2" y="508" width="946" height="40" fill="#2b2b2b" />
<rect x="948" y="508" width="1" height="40" fill="#3c3c3c"/>
<rect x="1135" y="508" width="1" height="40" fill="#3c3c3c"/>
<rect x="1374" y="508" width="1" height="40" fill="#3c3c3c"/>
<rect x="1729" y="508" width="1" height="40" fill="#3c3c3c"/>
<rect x="2" y="548" width="1891" height="1" fill="#a0a0a0"/>
<path d="M14.5 520 l9.5 9.8 h-5.8 v10.2 h-7.6 v-10.2 h-5.8 z" fill="#fff"/>
<text x="25.78" y="539.5" font-family="Liberation Sans" font-size="32" font-weight="normal" fill="#fff" text-anchor="start" textLength="82.09" lengthAdjust="spacingAndGlyphs" stroke="#fff" stroke-width="0.6">Name</text>
<text x="951.24" y="539.5" font-family="Liberation Sans" font-size="32" font-weight="normal" fill="#fff" text-anchor="start" textLength="46.79" lengthAdjust="spacingAndGlyphs" stroke="#fff" stroke-width="0.6">Ext</text>
<text x="1138.71" y="539.5" font-family="Liberation Sans" font-size="32" font-weight="normal" fill="#fff" text-anchor="start" textLength="63.64" lengthAdjust="spacingAndGlyphs" stroke="#fff" stroke-width="0.6">Size</text>
<text x="1377.71" y="539.5" font-family="Liberation Sans" font-size="32" font-weight="normal" fill="#fff" text-anchor="start" textLength="66.69" lengthAdjust="spacingAndGlyphs" stroke="#fff" stroke-width="0.6">Date</text>
<text x="1731.23" y="539.5" font-family="Liberation Sans" font-size="32" font-weight="normal" fill="#fff" text-anchor="start" textLength="53.54" lengthAdjust="spacingAndGlyphs" stroke="#fff" stroke-width="0.6">Attr</text>
<rect x="2" y="549" width="1891" height="1404" fill="#000" />
<rect x="1" y="1953" width="1893" height="1" fill="#a0a0a0"/>
<rect x="1946.5" y="315.5" width="74" height="46" fill="#282828" stroke="#3a3a3a" stroke-width="1"/>
<g transform="translate(1969,339)"><rect x="-17.5" y="-10" width="35" height="22" rx="3" fill="#0a0a0a" opacity=".35"/><path d="M-14 -10.5 H14 Q15 -10.5 15 -9.5 L16.5 1 H-16.5 L-15 -9.5 Q-15 -10.5 -14 -10.5 Z" fill="url(#drvg)"/><rect x="-17.5" y="0" width="35" height="10.5" rx="2" fill="#e2e2e6"/><rect x="-15" y="5.5" width="30" height="2.2" fill="#8a8a92"/><rect x="12" y="5" width="3.5" height="3.5" fill="#4ad04a"/></g>
<text x="1990.83" y="349" font-family="Liberation Sans" font-size="30" font-weight="bold" fill="#fff">c</text>
<rect x="2023.5" y="315.5" width="75" height="46" fill="#1a1a1a" stroke="#a0a0a0" stroke-width="1"/>
<g transform="translate(2045,338)"><rect x="-18" y="9" width="36" height="6" fill="#0c0c0c" opacity=".8"/><rect x="6.9" y="-18.6" width="11.2" height="26.8" rx="1" fill="#d8d8d8"/><rect x="8" y="1.5" width="9" height="4.5" fill="#6a8a6a"/><rect x="-18" y="-16" width="23.4" height="18.4" fill="#e4e4e4"/><rect x="-16" y="-14" width="19.4" height="14.4" fill="#4a9ae6"/><rect x="-10" y="2.4" width="6.7" height="6.6" fill="#c8c8c8"/><rect x="7.2" y="12.6" width="11.6" height="5.8" rx="1" fill="#22b82a"/></g>
<text x="0" y="0" transform="translate(2068.00,349) scale(0.95,1)" font-family="Liberation Sans" font-size="32" font-weight="normal" fill="#fff">W</text>
<rect x="2067.50" y="335.08" width="30.19" height="1.44" fill="#fff"/>
<rect x="1946.5" y="366.5" width="116" height="42" fill="#1a1a1a" stroke="#a0a0a0" stroke-width="1"/>
<g transform="translate(1969,388)"><rect x="-17.5" y="-10" width="35" height="22" rx="3" fill="#0a0a0a" opacity=".35"/><path d="M-14 -10.5 H14 Q15 -10.5 15 -9.5 L16.5 1 H-16.5 L-15 -9.5 Q-15 -10.5 -14 -10.5 Z" fill="url(#drvg)"/><rect x="-17.5" y="0" width="35" height="10.5" rx="2" fill="#e2e2e6"/><rect x="-15" y="5.5" width="30" height="2.2" fill="#8a8a92"/><rect x="12" y="5" width="3.5" height="3.5" fill="#4ad04a"/></g>
<text x="1992.83" y="399" font-family="Liberation Sans" font-size="30" font-weight="bold" fill="#fff">c</text>
<path d="M2029 383.5 l9.5 10 l9.5 -10" fill="none" stroke="#a0a0a0" stroke-width="1.4"/>
<text x="2065.22 2074.22 2092.22 2110.22 2128.22 2146.22 2164.22 2182.22 2209.22 2227.22 2245.22 2263.22 2272.22 2290.22 2317.22 2351.22 2369.22 2387.22 2405.22 2423.22 2441.22 2450.22 2468.22 2495.22 2529.22 2538.22 2549.22 2567.22" y="398" font-family="Liberation Sans" font-size="32" font-weight="normal" fill="#fff" stroke="#fff" stroke-width="0.6">[_none_]835.63Gof929.67Gfree</text>
<rect x="3742.5" y="366.5" width="47" height="41" fill="#1a1a1a" stroke="#a0a0a0" stroke-width="1"/>
<rect x="3789.5" y="366.5" width="48" height="41" fill="#1a1a1a" stroke="#a0a0a0" stroke-width="1"/>
<text x="0" y="0" transform="translate(3751.00,398) scale(0.97,1)" font-family="Liberation Sans" font-size="32" font-weight="normal" fill="#fff">W</text>
<rect x="3750.50" y="384.08" width="30.80" height="1.44" fill="#fff"/>
<text x="3805 3814" y="398" font-family="Liberation Sans" font-size="32" font-weight="normal" fill="#fff" stroke="#fff" stroke-width="0.6">..</text>
<rect x="1950" y="416" width="1890" height="48" fill="#2b2b2b" />
<rect x="1950" y="416" width="1890" height="1" fill="#3a3a3a"/>
<rect x="1950" y="416" width="1" height="48" fill="#3a3a3a"/>
<g transform="translate(2876,440)"><rect x="-17.5" y="-10" width="35" height="22" rx="3" fill="#0a0a0a" opacity=".35"/><path d="M-14 -10.5 H14 Q15 -10.5 15 -9.5 L16.5 1 H-16.5 L-15 -9.5 Q-15 -10.5 -14 -10.5 Z" fill="url(#drvg)"/><rect x="-17.5" y="0" width="35" height="10.5" rx="2" fill="#e2e2e6"/><rect x="-15" y="5.5" width="30" height="2.2" fill="#8a8a92"/><rect x="12" y="5" width="3.5" height="3.5" fill="#4ad04a"/></g>
<text x="2901.83 2918.83" y="449" font-family="Liberation Sans" font-size="30" font-weight="bold" fill="#fff">c:</text>
<rect x="1946" y="464" width="1894" height="1" fill="#a0a0a0"/>
<rect x="1946" y="464" width="1" height="1490" fill="#a0a0a0"/>
<rect x="3839" y="464" width="1" height="1490" fill="#a0a0a0"/>
<rect x="1947" y="465" width="1892" height="2" fill="#0c0c0c" />
<rect x="1947" y="467" width="1794" height="41" fill="#5e96d8" />
<rect x="1948" y="468" width="1793" height="39" fill="#006ad8" />
<path d="M1951 486.8 h31 l-15.5 16.4 z" fill="#fff"/>
<text x="0" y="0" transform="translate(2009.64,498) scale(0.85,1)" font-family="Liberation Sans" font-size="32" font-weight="normal" fill="#fff">W</text>
<rect x="2009.14" y="484.08" width="27.17" height="1.44" fill="#fff"/>
<text x="1983.64 1999.64 2036.64 2048.64 2057.64" y="498" font-family="Liberation Sans" font-size="32" font-weight="normal" fill="#fff" stroke="#fff" stroke-width="0.6">c:*.*</text>
<rect x="3742.5" y="467.5" width="47" height="40" fill="#1a1a1a" stroke="#a0a0a0" stroke-width="1"/>
<rect x="3789.5" y="467.5" width="48" height="40" fill="#1a1a1a" stroke="#a0a0a0" stroke-width="1"/>
<path d="M3766.00 494.00 L3766.00 480.00 M3761.05 491.95 L3770.95 482.05 M3759.00 487.00 L3773.00 487.00 M3761.05 482.05 L3770.95 491.95 " stroke="#fff" stroke-width="2.4"/><circle cx="3766" cy="487" r="1.8" fill="#1a1a1a"/>
<path d="M3803.5 481.5 h21 l-10.5 11 z" fill="#fff"/>
<rect x="1947" y="508" width="1892" height="40" fill="#1c1c1c" />
<rect x="1947" y="508" width="946" height="40" fill="#2b2b2b" />
<rect x="2893" y="508" width="1" height="40" fill="#3c3c3c"/>
<rect x="3080" y="508" width="1" height="40" fill="#3c3c3c"/>
<rect x="3319" y="508" width="1" height="40" fill="#3c3c3c"/>
<rect x="3674" y="508" width="1" height="40" fill="#3c3c3c"/>
<rect x="1947" y="548" width="1892" height="1" fill="#a0a0a0"/>
<path d="M1959.5 520 l9.5 9.8 h-5.8 v10.2 h-7.6 v-10.2 h-5.8 z" fill="#fff"/>
<text x="1970.78" y="539.5" font-family="Liberation Sans" font-size="32" font-weight="normal" fill="#fff" text-anchor="start" textLength="82.09" lengthAdjust="spacingAndGlyphs" stroke="#fff" stroke-width="0.6">Name</text>
<text x="2896.24" y="539.5" font-family="Liberation Sans" font-size="32" font-weight="normal" fill="#fff" text-anchor="start" textLength="46.79" lengthAdjust="spacingAndGlyphs" stroke="#fff" stroke-width="0.6">Ext</text>
<text x="3083.71" y="539.5" font-family="Liberation Sans" font-size="32" font-weight="normal" fill="#fff" text-anchor="start" textLength="63.64" lengthAdjust="spacingAndGlyphs" stroke="#fff" stroke-width="0.6">Size</text>
<text x="3322.71" y="539.5" font-family="Liberation Sans" font-size="32" font-weight="normal" fill="#fff" text-anchor="start" textLength="66.69" lengthAdjust="spacingAndGlyphs" stroke="#fff" stroke-width="0.6">Date</text>
<text x="3676.23" y="539.5" font-family="Liberation Sans" font-size="32" font-weight="normal" fill="#fff" text-anchor="start" textLength="53.54" lengthAdjust="spacingAndGlyphs" stroke="#fff" stroke-width="0.6">Attr</text>
<rect x="1947" y="549" width="1892" height="1404" fill="#000" />
<rect x="1946" y="1953" width="1894" height="1" fill="#a0a0a0"/>
<rect x="2" y="548" width="1847" height="1" fill="#6ea6c6"/>
<rect x="2" y="549" width="1847" height="1" fill="#4f86a8"/>
<rect x="2" y="585" width="1847" height="1" fill="#3d6d8c"/>
<rect x="2" y="548" width="1" height="38" fill="#3d6d8c"/>
<rect x="1848" y="548" width="1" height="38" fill="#3d6d8c"/>
<g transform="translate(20,567)"><path d="M-14.5 0 L-2 -12 V-6.5 Q11 -7 14 9 Q9 2.5 -2 3.5 V11 Z" fill="url(#upg)" stroke="#0a4a98" stroke-width="0.8"/><path d="M-11 -0.5 L-3 -8.5 V-4.5 Q6 -5 10 2 Q3 -2 -3 -1.5 Z" fill="#b8e4fc" opacity=".45"/></g>
<text x="37.68 46.68" y="578" font-family="Liberation Sans" font-size="32" font-weight="normal" fill="#14e6e0" stroke="#14e6e0" stroke-width="0.6">..</text>
<text x="1135.22 1154.22 1177.22 1186.22 1209.22" y="578" font-family="Liberation Sans" font-size="32" font-weight="normal" fill="#14e6e0" stroke="#14e6e0" stroke-width="0.6">&lt;DIR&gt;</text>
<text x="1374.09 1392.09 1410.09 1428.09 1446.09 1457.09 1475.09 1493.09 1504.09 1522.09 1549.09 1567.09 1585.09 1594.09 1612.09 1630.09 1639.09 1657.09" y="578" font-family="Liberation Sans" font-size="32" font-weight="normal" fill="#14e6e0" stroke="#14e6e0" stroke-width="0.6">2025-03-2712:31:27</text>
<text x="1729.58 1740.58 1751.58 1762.58" y="578" font-family="Liberation Sans" font-size="32" font-weight="normal" fill="#14e6e0" stroke="#14e6e0" stroke-width="0.6">----</text>
<g transform="translate(20,603.5)"><path d="M-10 -13.5 H4 L10 -7.5 V13.5 H-10 Z" fill="#f4f4f4"/><path d="M4 -13.5 V-7.5 H10" fill="#d8d8d8"/><rect x="-6.5" y="-6" width="13.5" height="14" rx="1.5" fill="#2a6ad8"/><path d="M-6.5 6 L-1 0 L7 7 V8 H-6.5 Z" fill="#4ab0f0"/><circle cx="3.5" cy="-3" r="1.6" fill="#fff"/></g>
<text x="38.5" y="615" font-family="Liberation Sans" font-size="32" font-weight="normal" fill="#80ff00" stroke="#80ff00" stroke-width="0.6">1</text>
<text x="948.18 955.18 973.18" y="615" font-family="Liberation Sans" font-size="32" font-weight="normal" fill="#80ff00" stroke="#80ff00" stroke-width="0.6">jpg</text>
<text x="1163.62 1181.62 1190.62 1208.62 1235.62" y="615" font-family="Liberation Sans" font-size="32" font-weight="normal" fill="#80ff00" stroke="#80ff00" stroke-width="0.6">4.62M</text>
<text x="1374.09 1392.09 1410.09 1428.09 1446.09 1457.09 1475.09 1493.09 1504.09 1522.09 1549.09 1567.09 1585.09 1594.09 1612.09 1630.09 1639.09 1657.09" y="615" font-family="Liberation Sans" font-size="32" font-weight="normal" fill="#80ff00" stroke="#80ff00" stroke-width="0.6">2016-03-1521:40:24</text>
<text x="1729.58 1740.58 1758.58 1769.58" y="615" font-family="Liberation Sans" font-size="32" font-weight="normal" fill="#80ff00" stroke="#80ff00" stroke-width="0.6">-a--</text>
<g transform="translate(20,640.5)"><path d="M-10 -13.5 H4 L10 -7.5 V13.5 H-10 Z" fill="#f4f4f4"/><path d="M4 -13.5 V-7.5 H10" fill="#d8d8d8"/><rect x="-6.5" y="-6" width="13.5" height="14" rx="1.5" fill="#2a6ad8"/><path d="M-6.5 6 L-1 0 L7 7 V8 H-6.5 Z" fill="#4ab0f0"/><circle cx="3.5" cy="-3" r="1.6" fill="#fff"/></g>
<text x="38.5" y="652" font-family="Liberation Sans" font-size="32" font-weight="normal" fill="#80ff00" stroke="#80ff00" stroke-width="0.6">2</text>
<text x="948.18 955.18 973.18" y="652" font-family="Liberation Sans" font-size="32" font-weight="normal" fill="#80ff00" stroke="#80ff00" stroke-width="0.6">jpg</text>
<text x="1163.62 1181.62 1190.62 1208.62 1235.62" y="652" font-family="Liberation Sans" font-size="32" font-weight="normal" fill="#80ff00" stroke="#80ff00" stroke-width="0.6">3.52M</text>
<text x="1374.09 1392.09 1410.09 1428.09 1446.09 1457.09 1475.09 1493.09 1504.09 1522.09 1549.09 1567.09 1585.09 1594.09 1612.09 1630.09 1639.09 1657.09" y="652" font-family="Liberation Sans" font-size="32" font-weight="normal" fill="#80ff00" stroke="#80ff00" stroke-width="0.6">2016-08-0620:26:38</text>
<text x="1729.58 1740.58 1758.58 1769.58" y="652" font-family="Liberation Sans" font-size="32" font-weight="normal" fill="#80ff00" stroke="#80ff00" stroke-width="0.6">-a--</text>
<g transform="translate(20,677.5)"><path d="M-10 -13.5 H4 L10 -7.5 V13.5 H-10 Z" fill="#f4f4f4"/><path d="M4 -13.5 V-7.5 H10" fill="#d8d8d8"/><rect x="-6.5" y="-6" width="13.5" height="14" rx="1.5" fill="#2a6ad8"/><path d="M-6.5 6 L-1 0 L7 7 V8 H-6.5 Z" fill="#4ab0f0"/><circle cx="3.5" cy="-3" r="1.6" fill="#fff"/></g>
<text x="38.5" y="689" font-family="Liberation Sans" font-size="32" font-weight="normal" fill="#80ff00" stroke="#80ff00" stroke-width="0.6">3</text>
<text x="948.18 955.18 973.18" y="689" font-family="Liberation Sans" font-size="32" font-weight="normal" fill="#80ff00" stroke="#80ff00" stroke-width="0.6">jpg</text>
<text x="1163.62 1181.62 1190.62 1208.62 1235.62" y="689" font-family="Liberation Sans" font-size="32" font-weight="normal" fill="#80ff00" stroke="#80ff00" stroke-width="0.6">2.43M</text>
<text x="1374.09 1392.09 1410.09 1428.09 1446.09 1457.09 1475.09 1493.09 1504.09 1522.09 1549.09 1567.09 1585.09 1594.09 1612.09 1630.09 1639.09 1657.09" y="689" font-family="Liberation Sans" font-size="32" font-weight="normal" fill="#80ff00" stroke="#80ff00" stroke-width="0.6">2016-03-1521:40:26</text>
<text x="1729.58 1740.58 1758.58 1769.58" y="689" font-family="Liberation Sans" font-size="32" font-weight="normal" fill="#80ff00" stroke="#80ff00" stroke-width="0.6">-a--</text>
<g transform="translate(20,714.5)"><path d="M-10 -13.5 H4 L10 -7.5 V13.5 H-10 Z" fill="#f4f4f4"/><path d="M4 -13.5 V-7.5 H10" fill="#d8d8d8"/><rect x="-6.5" y="-6" width="13.5" height="14" rx="1.5" fill="#2a6ad8"/><path d="M-6.5 6 L-1 0 L7 7 V8 H-6.5 Z" fill="#4ab0f0"/><circle cx="3.5" cy="-3" r="1.6" fill="#fff"/></g>
<text x="38.5" y="726" font-family="Liberation Sans" font-size="32" font-weight="normal" fill="#80ff00" stroke="#80ff00" stroke-width="0.6">4</text>
<text x="948.18 955.18 973.18" y="726" font-family="Liberation Sans" font-size="32" font-weight="normal" fill="#80ff00" stroke="#80ff00" stroke-width="0.6">jpg</text>
<text x="1163.62 1181.62 1190.62 1208.62 1235.62" y="726" font-family="Liberation Sans" font-size="32" font-weight="normal" fill="#80ff00" stroke="#80ff00" stroke-width="0.6">3.70M</text>
<text x="1374.09 1392.09 1410.09 1428.09 1446.09 1457.09 1475.09 1493.09 1504.09 1522.09 1549.09 1567.09 1585.09 1594.09 1612.09 1630.09 1639.09 1657.09" y="726" font-family="Liberation Sans" font-size="32" font-weight="normal" fill="#80ff00" stroke="#80ff00" stroke-width="0.6">2016-03-1521:40:32</text>
<text x="1729.58 1740.58 1758.58 1769.58" y="726" font-family="Liberation Sans" font-size="32" font-weight="normal" fill="#80ff00" stroke="#80ff00" stroke-width="0.6">-a--</text>
<g transform="translate(20,751.5)"><path d="M-10 -13.5 H4 L10 -7.5 V13.5 H-10 Z" fill="#f4f4f4"/><path d="M4 -13.5 V-7.5 H10" fill="#d8d8d8"/><rect x="-6.5" y="-6" width="13.5" height="14" rx="1.5" fill="#2a6ad8"/><path d="M-6.5 6 L-1 0 L7 7 V8 H-6.5 Z" fill="#4ab0f0"/><circle cx="3.5" cy="-3" r="1.6" fill="#fff"/></g>
<text x="38.5" y="763" font-family="Liberation Sans" font-size="32" font-weight="normal" fill="#80ff00" stroke="#80ff00" stroke-width="0.6">5</text>
<text x="948.18 955.18 973.18" y="763" font-family="Liberation Sans" font-size="32" font-weight="normal" fill="#80ff00" stroke="#80ff00" stroke-width="0.6">jpg</text>
<text x="1163.62 1181.62 1190.62 1208.62 1235.62" y="763" font-family="Liberation Sans" font-size="32" font-weight="normal" fill="#80ff00" stroke="#80ff00" stroke-width="0.6">3.36M</text>
<text x="1374.09 1392.09 1410.09 1428.09 1446.09 1457.09 1475.09 1493.09 1504.09 1522.09 1549.09 1567.09 1585.09 1594.09 1612.09 1630.09 1639.09 1657.09" y="763" font-family="Liberation Sans" font-size="32" font-weight="normal" fill="#80ff00" stroke="#80ff00" stroke-width="0.6">2016-03-1521:40:34</text>
<text x="1729.58 1740.58 1758.58 1769.58" y="763" font-family="Liberation Sans" font-size="32" font-weight="normal" fill="#80ff00" stroke="#80ff00" stroke-width="0.6">-a--</text>
<g transform="translate(20,788.5)"><path d="M-10 -13.5 H4 L10 -7.5 V13.5 H-10 Z" fill="#f4f4f4"/><path d="M4 -13.5 V-7.5 H10" fill="#d8d8d8"/><rect x="-6.5" y="-6" width="13.5" height="14" rx="1.5" fill="#2a6ad8"/><path d="M-6.5 6 L-1 0 L7 7 V8 H-6.5 Z" fill="#4ab0f0"/><circle cx="3.5" cy="-3" r="1.6" fill="#fff"/></g>
<text x="38.5" y="800" font-family="Liberation Sans" font-size="32" font-weight="normal" fill="#80ff00" stroke="#80ff00" stroke-width="0.6">6</text>
<text x="948.18 955.18 973.18" y="800" font-family="Liberation Sans" font-size="32" font-weight="normal" fill="#80ff00" stroke="#80ff00" stroke-width="0.6">jpg</text>
<text x="1163.62 1181.62 1190.62 1208.62 1235.62" y="800" font-family="Liberation Sans" font-size="32" font-weight="normal" fill="#80ff00" stroke="#80ff00" stroke-width="0.6">4.75M</text>
<text x="1374.09 1392.09 1410.09 1428.09 1446.09 1457.09 1475.09 1493.09 1504.09 1522.09 1549.09 1567.09 1585.09 1594.09 1612.09 1630.09 1639.09 1657.09" y="800" font-family="Liberation Sans" font-size="32" font-weight="normal" fill="#80ff00" stroke="#80ff00" stroke-width="0.6">2016-03-1521:40:32</text>
<text x="1729.58 1740.58 1758.58 1769.58" y="800" font-family="Liberation Sans" font-size="32" font-weight="normal" fill="#80ff00" stroke="#80ff00" stroke-width="0.6">-a--</text>
<g transform="translate(20,825.5)"><path d="M-10 -13.5 H4 L10 -7.5 V13.5 H-10 Z" fill="#f4f4f4"/><path d="M4 -13.5 V-7.5 H10" fill="#d8d8d8"/><rect x="-6.5" y="-6" width="13.5" height="14" rx="1.5" fill="#2a6ad8"/><path d="M-6.5 6 L-1 0 L7 7 V8 H-6.5 Z" fill="#4ab0f0"/><circle cx="3.5" cy="-3" r="1.6" fill="#fff"/></g>
<text x="38.5" y="837" font-family="Liberation Sans" font-size="32" font-weight="normal" fill="#80ff00" stroke="#80ff00" stroke-width="0.6">7</text>
<text x="948.18 955.18 973.18" y="837" font-family="Liberation Sans" font-size="32" font-weight="normal" fill="#80ff00" stroke="#80ff00" stroke-width="0.6">jpg</text>
<text x="1163.62 1181.62 1190.62 1208.62 1235.62" y="837" font-family="Liberation Sans" font-size="32" font-weight="normal" fill="#80ff00" stroke="#80ff00" stroke-width="0.6">4.74M</text>
<text x="1374.09 1392.09 1410.09 1428.09 1446.09 1457.09 1475.09 1493.09 1504.09 1522.09 1549.09 1567.09 1585.09 1594.09 1612.09 1630.09 1639.09 1657.09" y="837" font-family="Liberation Sans" font-size="32" font-weight="normal" fill="#80ff00" stroke="#80ff00" stroke-width="0.6">2015-06-2413:54:26</text>
<text x="1729.58 1740.58 1758.58 1769.58" y="837" font-family="Liberation Sans" font-size="32" font-weight="normal" fill="#80ff00" stroke="#80ff00" stroke-width="0.6">-a--</text>
<g transform="translate(20,862.5)"><path d="M-10 -13.5 H4 L10 -7.5 V13.5 H-10 Z" fill="#f4f4f4"/><path d="M4 -13.5 V-7.5 H10" fill="#d8d8d8"/><rect x="-6.5" y="-6" width="13.5" height="14" rx="1.5" fill="#2a6ad8"/><path d="M-6.5 6 L-1 0 L7 7 V8 H-6.5 Z" fill="#4ab0f0"/><circle cx="3.5" cy="-3" r="1.6" fill="#fff"/></g>
<text x="38.5" y="874" font-family="Liberation Sans" font-size="32" font-weight="normal" fill="#80ff00" stroke="#80ff00" stroke-width="0.6">8</text>
<text x="948.18 955.18 973.18" y="874" font-family="Liberation Sans" font-size="32" font-weight="normal" fill="#80ff00" stroke="#80ff00" stroke-width="0.6">jpg</text>
<text x="1163.62 1181.62 1190.62 1208.62 1235.62" y="874" font-family="Liberation Sans" font-size="32" font-weight="normal" fill="#80ff00" stroke="#80ff00" stroke-width="0.6">3.23M</text>
<text x="1374.09 1392.09 1410.09 1428.09 1446.09 1457.09 1475.09 1493.09 1504.09 1522.09 1549.09 1567.09 1585.09 1594.09 1612.09 1630.09 1639.09 1657.09" y="874" font-family="Liberation Sans" font-size="32" font-weight="normal" fill="#80ff00" stroke="#80ff00" stroke-width="0.6">2016-03-1521:40:32</text>
<text x="1729.58 1740.58 1758.58 1769.58" y="874" font-family="Liberation Sans" font-size="32" font-weight="normal" fill="#80ff00" stroke="#80ff00" stroke-width="0.6">-a--</text>
<g transform="translate(20,899.5)"><path d="M-10 -13.5 H4 L10 -7.5 V13.5 H-10 Z" fill="#f4f4f4"/><path d="M4 -13.5 V-7.5 H10" fill="#d8d8d8"/><rect x="-6.5" y="-6" width="13.5" height="14" rx="1.5" fill="#2a6ad8"/><path d="M-6.5 6 L-1 0 L7 7 V8 H-6.5 Z" fill="#4ab0f0"/><circle cx="3.5" cy="-3" r="1.6" fill="#fff"/></g>
<text x="38.5" y="911" font-family="Liberation Sans" font-size="32" font-weight="normal" fill="#80ff00" stroke="#80ff00" stroke-width="0.6">9</text>
<text x="948.18 955.18 973.18" y="911" font-family="Liberation Sans" font-size="32" font-weight="normal" fill="#80ff00" stroke="#80ff00" stroke-width="0.6">jpg</text>
<text x="1163.62 1181.62 1190.62 1208.62 1235.62" y="911" font-family="Liberation Sans" font-size="32" font-weight="normal" fill="#80ff00" stroke="#80ff00" stroke-width="0.6">2.66M</text>
<text x="1374.09 1392.09 1410.09 1428.09 1446.09 1457.09 1475.09 1493.09 1504.09 1522.09 1549.09 1567.09 1585.09 1594.09 1612.09 1630.09 1639.09 1657.09" y="911" font-family="Liberation Sans" font-size="32" font-weight="normal" fill="#80ff00" stroke="#80ff00" stroke-width="0.6">2016-08-0620:26:24</text>
<text x="1729.58 1740.58 1758.58 1769.58" y="911" font-family="Liberation Sans" font-size="32" font-weight="normal" fill="#80ff00" stroke="#80ff00" stroke-width="0.6">-a--</text>
<g transform="translate(20,936.5)"><path d="M-10 -13.5 H4 L10 -7.5 V13.5 H-10 Z" fill="#f4f4f4"/><path d="M4 -13.5 V-7.5 H10" fill="#d8d8d8"/><rect x="-6.5" y="-6" width="13.5" height="14" rx="1.5" fill="#2a6ad8"/><path d="M-6.5 6 L-1 0 L7 7 V8 H-6.5 Z" fill="#4ab0f0"/><circle cx="3.5" cy="-3" r="1.6" fill="#fff"/></g>
<text x="38.5 56.5" y="948" font-family="Liberation Sans" font-size="32" font-weight="normal" fill="#80ff00" stroke="#80ff00" stroke-width="0.6">10</text>
<text x="948.18 955.18 973.18" y="948" font-family="Liberation Sans" font-size="32" font-weight="normal" fill="#80ff00" stroke="#80ff00" stroke-width="0.6">jpg</text>
<text x="1163.62 1181.62 1190.62 1208.62 1235.62" y="948" font-family="Liberation Sans" font-size="32" font-weight="normal" fill="#80ff00" stroke="#80ff00" stroke-width="0.6">4.13M</text>
<text x="1374.09 1392.09 1410.09 1428.09 1446.09 1457.09 1475.09 1493.09 1504.09 1522.09 1549.09 1567.09 1585.09 1594.09 1612.09 1630.09 1639.09 1657.09" y="948" font-family="Liberation Sans" font-size="32" font-weight="normal" fill="#80ff00" stroke="#80ff00" stroke-width="0.6">2016-08-0620:26:32</text>
<text x="1729.58 1740.58 1758.58 1769.58" y="948" font-family="Liberation Sans" font-size="32" font-weight="normal" fill="#80ff00" stroke="#80ff00" stroke-width="0.6">-a--</text>
<g transform="translate(20,973.5)"><path d="M-10 -13.5 H4 L10 -7.5 V13.5 H-10 Z" fill="#f4f4f4"/><path d="M4 -13.5 V-7.5 H10" fill="#d8d8d8"/><rect x="-6.5" y="-6" width="13.5" height="14" rx="1.5" fill="#2a6ad8"/><path d="M-6.5 6 L-1 0 L7 7 V8 H-6.5 Z" fill="#4ab0f0"/><circle cx="3.5" cy="-3" r="1.6" fill="#fff"/></g>
<text x="38.5 56.5" y="985" font-family="Liberation Sans" font-size="32" font-weight="normal" fill="#80ff00" stroke="#80ff00" stroke-width="0.6">11</text>
<text x="948.18 955.18 973.18" y="985" font-family="Liberation Sans" font-size="32" font-weight="normal" fill="#80ff00" stroke="#80ff00" stroke-width="0.6">jpg</text>
<text x="1163.62 1181.62 1190.62 1208.62 1235.62" y="985" font-family="Liberation Sans" font-size="32" font-weight="normal" fill="#80ff00" stroke="#80ff00" stroke-width="0.6">3.82M</text>
<text x="1374.09 1392.09 1410.09 1428.09 1446.09 1457.09 1475.09 1493.09 1504.09 1522.09 1549.09 1567.09 1585.09 1594.09 1612.09 1630.09 1639.09 1657.09" y="985" font-family="Liberation Sans" font-size="32" font-weight="normal" fill="#80ff00" stroke="#80ff00" stroke-width="0.6">2016-08-0620:26:44</text>
<text x="1729.58 1740.58 1758.58 1769.58" y="985" font-family="Liberation Sans" font-size="32" font-weight="normal" fill="#80ff00" stroke="#80ff00" stroke-width="0.6">-a--</text>
<g transform="translate(20,1010.5)"><path d="M-10 -13.5 H4 L10 -7.5 V13.5 H-10 Z" fill="#f4f4f4"/><path d="M4 -13.5 V-7.5 H10" fill="#d8d8d8"/><rect x="-6.5" y="-6" width="13.5" height="14" rx="1.5" fill="#2a6ad8"/><path d="M-6.5 6 L-1 0 L7 7 V8 H-6.5 Z" fill="#4ab0f0"/><circle cx="3.5" cy="-3" r="1.6" fill="#fff"/></g>
<text x="38.5 56.5" y="1022" font-family="Liberation Sans" font-size="32" font-weight="normal" fill="#80ff00" stroke="#80ff00" stroke-width="0.6">12</text>
<text x="948.18 955.18 973.18" y="1022" font-family="Liberation Sans" font-size="32" font-weight="normal" fill="#80ff00" stroke="#80ff00" stroke-width="0.6">jpg</text>
<text x="1163.62 1181.62 1190.62 1208.62 1235.62" y="1022" font-family="Liberation Sans" font-size="32" font-weight="normal" fill="#80ff00" stroke="#80ff00" stroke-width="0.6">4.00M</text>
<text x="1374.09 1392.09 1410.09 1428.09 1446.09 1457.09 1475.09 1493.09 1504.09 1522.09 1549.09 1567.09 1585.09 1594.09 1612.09 1630.09 1639.09 1657.09" y="1022" font-family="Liberation Sans" font-size="32" font-weight="normal" fill="#80ff00" stroke="#80ff00" stroke-width="0.6">2016-03-1521:40:24</text>
<text x="1729.58 1740.58 1758.58 1769.58" y="1022" font-family="Liberation Sans" font-size="32" font-weight="normal" fill="#80ff00" stroke="#80ff00" stroke-width="0.6">-a--</text>
<g transform="translate(20,1047.5)"><path d="M-10 -13.5 H4 L10 -7.5 V13.5 H-10 Z" fill="#f4f4f4"/><path d="M4 -13.5 V-7.5 H10" fill="#d8d8d8"/><rect x="-6.5" y="-6" width="13.5" height="14" rx="1.5" fill="#2a6ad8"/><path d="M-6.5 6 L-1 0 L7 7 V8 H-6.5 Z" fill="#4ab0f0"/><circle cx="3.5" cy="-3" r="1.6" fill="#fff"/></g>
<text x="38.5 56.5" y="1059" font-family="Liberation Sans" font-size="32" font-weight="normal" fill="#80ff00" stroke="#80ff00" stroke-width="0.6">13</text>
<text x="948.18 955.18 973.18" y="1059" font-family="Liberation Sans" font-size="32" font-weight="normal" fill="#80ff00" stroke="#80ff00" stroke-width="0.6">jpg</text>
<text x="1163.62 1181.62 1190.62 1208.62 1235.62" y="1059" font-family="Liberation Sans" font-size="32" font-weight="normal" fill="#80ff00" stroke="#80ff00" stroke-width="0.6">4.20M</text>
<text x="1374.09 1392.09 1410.09 1428.09 1446.09 1457.09 1475.09 1493.09 1504.09 1522.09 1549.09 1567.09 1585.09 1594.09 1612.09 1630.09 1639.09 1657.09" y="1059" font-family="Liberation Sans" font-size="32" font-weight="normal" fill="#80ff00" stroke="#80ff00" stroke-width="0.6">2016-03-1521:40:24</text>
<text x="1729.58 1740.58 1758.58 1769.58" y="1059" font-family="Liberation Sans" font-size="32" font-weight="normal" fill="#80ff00" stroke="#80ff00" stroke-width="0.6">-a--</text>
<g transform="translate(20,1084.5)"><path d="M-10 -13.5 H4 L10 -7.5 V13.5 H-10 Z" fill="#f4f4f4"/><path d="M4 -13.5 V-7.5 H10" fill="#d8d8d8"/><rect x="-6.5" y="-6" width="13.5" height="14" rx="1.5" fill="#2a6ad8"/><path d="M-6.5 6 L-1 0 L7 7 V8 H-6.5 Z" fill="#4ab0f0"/><circle cx="3.5" cy="-3" r="1.6" fill="#fff"/></g>
<text x="38.5 56.5" y="1096" font-family="Liberation Sans" font-size="32" font-weight="normal" fill="#80ff00" stroke="#80ff00" stroke-width="0.6">14</text>
<text x="948.18 955.18 973.18" y="1096" font-family="Liberation Sans" font-size="32" font-weight="normal" fill="#80ff00" stroke="#80ff00" stroke-width="0.6">jpg</text>
<text x="1163.62 1181.62 1190.62 1208.62 1235.62" y="1096" font-family="Liberation Sans" font-size="32" font-weight="normal" fill="#80ff00" stroke="#80ff00" stroke-width="0.6">2.90M</text>
<text x="1374.09 1392.09 1410.09 1428.09 1446.09 1457.09 1475.09 1493.09 1504.09 1522.09 1549.09 1567.09 1585.09 1594.09 1612.09 1630.09 1639.09 1657.09" y="1096" font-family="Liberation Sans" font-size="32" font-weight="normal" fill="#80ff00" stroke="#80ff00" stroke-width="0.6">2014-12-2814:18:02</text>
<text x="1729.58 1740.58 1758.58 1769.58" y="1096" font-family="Liberation Sans" font-size="32" font-weight="normal" fill="#80ff00" stroke="#80ff00" stroke-width="0.6">-a--</text>
<g transform="translate(20,1121.5)"><path d="M-10 -13.5 H4 L10 -7.5 V13.5 H-10 Z" fill="#f4f4f4"/><path d="M4 -13.5 V-7.5 H10" fill="#d8d8d8"/><rect x="-6.5" y="-6" width="13.5" height="14" rx="1.5" fill="#2a6ad8"/><path d="M-6.5 6 L-1 0 L7 7 V8 H-6.5 Z" fill="#4ab0f0"/><circle cx="3.5" cy="-3" r="1.6" fill="#fff"/></g>
<text x="38.5 56.5" y="1133" font-family="Liberation Sans" font-size="32" font-weight="normal" fill="#80ff00" stroke="#80ff00" stroke-width="0.6">15</text>
<text x="948.18 955.18 973.18" y="1133" font-family="Liberation Sans" font-size="32" font-weight="normal" fill="#80ff00" stroke="#80ff00" stroke-width="0.6">jpg</text>
<text x="1163.62 1181.62 1190.62 1208.62 1235.62" y="1133" font-family="Liberation Sans" font-size="32" font-weight="normal" fill="#80ff00" stroke="#80ff00" stroke-width="0.6">4.42M</text>
<text x="1374.09 1392.09 1410.09 1428.09 1446.09 1457.09 1475.09 1493.09 1504.09 1522.09 1549.09 1567.09 1585.09 1594.09 1612.09 1630.09 1639.09 1657.09" y="1133" font-family="Liberation Sans" font-size="32" font-weight="normal" fill="#80ff00" stroke="#80ff00" stroke-width="0.6">2014-09-1609:36:38</text>
<text x="1729.58 1740.58 1758.58 1769.58" y="1133" font-family="Liberation Sans" font-size="32" font-weight="normal" fill="#80ff00" stroke="#80ff00" stroke-width="0.6">-a--</text>
<g transform="translate(20,1158.5)"><path d="M-10 -13.5 H4 L10 -7.5 V13.5 H-10 Z" fill="#f4f4f4"/><path d="M4 -13.5 V-7.5 H10" fill="#d8d8d8"/><rect x="-6.5" y="-6" width="13.5" height="14" rx="1.5" fill="#2a6ad8"/><path d="M-6.5 6 L-1 0 L7 7 V8 H-6.5 Z" fill="#4ab0f0"/><circle cx="3.5" cy="-3" r="1.6" fill="#fff"/></g>
<text x="38.5 56.5" y="1170" font-family="Liberation Sans" font-size="32" font-weight="normal" fill="#80ff00" stroke="#80ff00" stroke-width="0.6">16</text>
<text x="948.18 955.18 973.18" y="1170" font-family="Liberation Sans" font-size="32" font-weight="normal" fill="#80ff00" stroke="#80ff00" stroke-width="0.6">jpg</text>
<text x="1163.62 1181.62 1190.62 1208.62 1235.62" y="1170" font-family="Liberation Sans" font-size="32" font-weight="normal" fill="#80ff00" stroke="#80ff00" stroke-width="0.6">5.36M</text>
<text x="1374.09 1392.09 1410.09 1428.09 1446.09 1457.09 1475.09 1493.09 1504.09 1522.09 1549.09 1567.09 1585.09 1594.09 1612.09 1630.09 1639.09 1657.09" y="1170" font-family="Liberation Sans" font-size="32" font-weight="normal" fill="#80ff00" stroke="#80ff00" stroke-width="0.6">2015-07-2520:39:12</text>
<text x="1729.58 1740.58 1758.58 1769.58" y="1170" font-family="Liberation Sans" font-size="32" font-weight="normal" fill="#80ff00" stroke="#80ff00" stroke-width="0.6">-a--</text>
<g transform="translate(20,1195.5)"><path d="M-10 -13.5 H4 L10 -7.5 V13.5 H-10 Z" fill="#f4f4f4"/><path d="M4 -13.5 V-7.5 H10" fill="#d8d8d8"/><rect x="-6.5" y="-6" width="13.5" height="14" rx="1.5" fill="#2a6ad8"/><path d="M-6.5 6 L-1 0 L7 7 V8 H-6.5 Z" fill="#4ab0f0"/><circle cx="3.5" cy="-3" r="1.6" fill="#fff"/></g>
<text x="38.5 56.5" y="1207" font-family="Liberation Sans" font-size="32" font-weight="normal" fill="#80ff00" stroke="#80ff00" stroke-width="0.6">17</text>
<text x="948.18 955.18 973.18" y="1207" font-family="Liberation Sans" font-size="32" font-weight="normal" fill="#80ff00" stroke="#80ff00" stroke-width="0.6">jpg</text>
<text x="1163.62 1181.62 1190.62 1208.62 1235.62" y="1207" font-family="Liberation Sans" font-size="32" font-weight="normal" fill="#80ff00" stroke="#80ff00" stroke-width="0.6">3.43M</text>
<text x="1374.09 1392.09 1410.09 1428.09 1446.09 1457.09 1475.09 1493.09 1504.09 1522.09 1549.09 1567.09 1585.09 1594.09 1612.09 1630.09 1639.09 1657.09" y="1207" font-family="Liberation Sans" font-size="32" font-weight="normal" fill="#80ff00" stroke="#80ff00" stroke-width="0.6">2016-03-1521:40:34</text>
<text x="1729.58 1740.58 1758.58 1769.58" y="1207" font-family="Liberation Sans" font-size="32" font-weight="normal" fill="#80ff00" stroke="#80ff00" stroke-width="0.6">-a--</text>
<g transform="translate(20,1232.5)"><path d="M-10 -13.5 H4 L10 -7.5 V13.5 H-10 Z" fill="#f4f4f4"/><path d="M4 -13.5 V-7.5 H10" fill="#d8d8d8"/><rect x="-6.5" y="-6" width="13.5" height="14" rx="1.5" fill="#2a6ad8"/><path d="M-6.5 6 L-1 0 L7 7 V8 H-6.5 Z" fill="#4ab0f0"/><circle cx="3.5" cy="-3" r="1.6" fill="#fff"/></g>
<text x="38.5 56.5" y="1244" font-family="Liberation Sans" font-size="32" font-weight="normal" fill="#80ff00" stroke="#80ff00" stroke-width="0.6">18</text>
<text x="948.18 955.18 973.18" y="1244" font-family="Liberation Sans" font-size="32" font-weight="normal" fill="#80ff00" stroke="#80ff00" stroke-width="0.6">jpg</text>
<text x="1163.62 1181.62 1190.62 1208.62 1235.62" y="1244" font-family="Liberation Sans" font-size="32" font-weight="normal" fill="#80ff00" stroke="#80ff00" stroke-width="0.6">5.64M</text>
<text x="1374.09 1392.09 1410.09 1428.09 1446.09 1457.09 1475.09 1493.09 1504.09 1522.09 1549.09 1567.09 1585.09 1594.09 1612.09 1630.09 1639.09 1657.09" y="1244" font-family="Liberation Sans" font-size="32" font-weight="normal" fill="#80ff00" stroke="#80ff00" stroke-width="0.6">2016-03-1521:40:34</text>
<text x="1729.58 1740.58 1758.58 1769.58" y="1244" font-family="Liberation Sans" font-size="32" font-weight="normal" fill="#80ff00" stroke="#80ff00" stroke-width="0.6">-a--</text>
<g transform="translate(20,1269.5)"><path d="M-10 -13.5 H4 L10 -7.5 V13.5 H-10 Z" fill="#f4f4f4"/><path d="M4 -13.5 V-7.5 H10" fill="#d8d8d8"/><rect x="-6.5" y="-6" width="13.5" height="14" rx="1.5" fill="#2a6ad8"/><path d="M-6.5 6 L-1 0 L7 7 V8 H-6.5 Z" fill="#4ab0f0"/><circle cx="3.5" cy="-3" r="1.6" fill="#fff"/></g>
<text x="38.5 56.5" y="1281" font-family="Liberation Sans" font-size="32" font-weight="normal" fill="#80ff00" stroke="#80ff00" stroke-width="0.6">19</text>
<text x="948.18 955.18 973.18" y="1281" font-family="Liberation Sans" font-size="32" font-weight="normal" fill="#80ff00" stroke="#80ff00" stroke-width="0.6">jpg</text>
<text x="1163.62 1181.62 1190.62 1208.62 1235.62" y="1281" font-family="Liberation Sans" font-size="32" font-weight="normal" fill="#80ff00" stroke="#80ff00" stroke-width="0.6">3.54M</text>
<text x="1374.09 1392.09 1410.09 1428.09 1446.09 1457.09 1475.09 1493.09 1504.09 1522.09 1549.09 1567.09 1585.09 1594.09 1612.09 1630.09 1639.09 1657.09" y="1281" font-family="Liberation Sans" font-size="32" font-weight="normal" fill="#80ff00" stroke="#80ff00" stroke-width="0.6">2016-08-0620:26:18</text>
<text x="1729.58 1740.58 1758.58 1769.58" y="1281" font-family="Liberation Sans" font-size="32" font-weight="normal" fill="#80ff00" stroke="#80ff00" stroke-width="0.6">-a--</text>
<g transform="translate(20,1306.5)"><path d="M-10 -13.5 H4 L10 -7.5 V13.5 H-10 Z" fill="#f4f4f4"/><path d="M4 -13.5 V-7.5 H10" fill="#d8d8d8"/><rect x="-6.5" y="-6" width="13.5" height="14" rx="1.5" fill="#2a6ad8"/><path d="M-6.5 6 L-1 0 L7 7 V8 H-6.5 Z" fill="#4ab0f0"/><circle cx="3.5" cy="-3" r="1.6" fill="#fff"/></g>
<text x="38.5 56.5" y="1318" font-family="Liberation Sans" font-size="32" font-weight="normal" fill="#80ff00" stroke="#80ff00" stroke-width="0.6">20</text>
<text x="948.18 955.18 973.18" y="1318" font-family="Liberation Sans" font-size="32" font-weight="normal" fill="#80ff00" stroke="#80ff00" stroke-width="0.6">jpg</text>
<text x="1163.62 1181.62 1190.62 1208.62 1235.62" y="1318" font-family="Liberation Sans" font-size="32" font-weight="normal" fill="#80ff00" stroke="#80ff00" stroke-width="0.6">6.10M</text>
<text x="1374.09 1392.09 1410.09 1428.09 1446.09 1457.09 1475.09 1493.09 1504.09 1522.09 1549.09 1567.09 1585.09 1594.09 1612.09 1630.09 1639.09 1657.09" y="1318" font-family="Liberation Sans" font-size="32" font-weight="normal" fill="#80ff00" stroke="#80ff00" stroke-width="0.6">2016-08-0620:27:46</text>
<text x="1729.58 1740.58 1758.58 1769.58" y="1318" font-family="Liberation Sans" font-size="32" font-weight="normal" fill="#80ff00" stroke="#80ff00" stroke-width="0.6">-a--</text>
<g transform="translate(20,1343.5)"><path d="M-10 -13.5 H4 L10 -7.5 V13.5 H-10 Z" fill="#f4f4f4"/><path d="M4 -13.5 V-7.5 H10" fill="#d8d8d8"/><rect x="-6.5" y="-6" width="13.5" height="14" rx="1.5" fill="#2a6ad8"/><path d="M-6.5 6 L-1 0 L7 7 V8 H-6.5 Z" fill="#4ab0f0"/><circle cx="3.5" cy="-3" r="1.6" fill="#fff"/></g>
<text x="38.5 56.5" y="1355" font-family="Liberation Sans" font-size="32" font-weight="normal" fill="#80ff00" stroke="#80ff00" stroke-width="0.6">21</text>
<text x="948.18 955.18 973.18" y="1355" font-family="Liberation Sans" font-size="32" font-weight="normal" fill="#80ff00" stroke="#80ff00" stroke-width="0.6">jpg</text>
<text x="1163.62 1181.62 1190.62 1208.62 1235.62" y="1355" font-family="Liberation Sans" font-size="32" font-weight="normal" fill="#80ff00" stroke="#80ff00" stroke-width="0.6">4.38M</text>
<text x="1374.09 1392.09 1410.09 1428.09 1446.09 1457.09 1475.09 1493.09 1504.09 1522.09 1549.09 1567.09 1585.09 1594.09 1612.09 1630.09 1639.09 1657.09" y="1355" font-family="Liberation Sans" font-size="32" font-weight="normal" fill="#80ff00" stroke="#80ff00" stroke-width="0.6">2016-03-1521:40:26</text>
<text x="1729.58 1740.58 1758.58 1769.58" y="1355" font-family="Liberation Sans" font-size="32" font-weight="normal" fill="#80ff00" stroke="#80ff00" stroke-width="0.6">-a--</text>
<g transform="translate(20,1380.5)"><path d="M-10 -13.5 H4 L10 -7.5 V13.5 H-10 Z" fill="#f4f4f4"/><path d="M4 -13.5 V-7.5 H10" fill="#d8d8d8"/><rect x="-6.5" y="-6" width="13.5" height="14" rx="1.5" fill="#2a6ad8"/><path d="M-6.5 6 L-1 0 L7 7 V8 H-6.5 Z" fill="#4ab0f0"/><circle cx="3.5" cy="-3" r="1.6" fill="#fff"/></g>
<text x="38.5 56.5" y="1392" font-family="Liberation Sans" font-size="32" font-weight="normal" fill="#80ff00" stroke="#80ff00" stroke-width="0.6">22</text>
<text x="948.18 955.18 973.18" y="1392" font-family="Liberation Sans" font-size="32" font-weight="normal" fill="#80ff00" stroke="#80ff00" stroke-width="0.6">jpg</text>
<text x="1163.62 1181.62 1190.62 1208.62 1235.62" y="1392" font-family="Liberation Sans" font-size="32" font-weight="normal" fill="#80ff00" stroke="#80ff00" stroke-width="0.6">3.64M</text>
<text x="1374.09 1392.09 1410.09 1428.09 1446.09 1457.09 1475.09 1493.09 1504.09 1522.09 1549.09 1567.09 1585.09 1594.09 1612.09 1630.09 1639.09 1657.09" y="1392" font-family="Liberation Sans" font-size="32" font-weight="normal" fill="#80ff00" stroke="#80ff00" stroke-width="0.6">2016-08-0620:27:06</text>
<text x="1729.58 1740.58 1758.58 1769.58" y="1392" font-family="Liberation Sans" font-size="32" font-weight="normal" fill="#80ff00" stroke="#80ff00" stroke-width="0.6">-a--</text>
<g transform="translate(20,1417.5)"><path d="M-10 -13.5 H4 L10 -7.5 V13.5 H-10 Z" fill="#f4f4f4"/><path d="M4 -13.5 V-7.5 H10" fill="#d8d8d8"/><rect x="-6.5" y="-6" width="13.5" height="14" rx="1.5" fill="#2a6ad8"/><path d="M-6.5 6 L-1 0 L7 7 V8 H-6.5 Z" fill="#4ab0f0"/><circle cx="3.5" cy="-3" r="1.6" fill="#fff"/></g>
<text x="38.5 56.5" y="1429" font-family="Liberation Sans" font-size="32" font-weight="normal" fill="#80ff00" stroke="#80ff00" stroke-width="0.6">23</text>
<text x="948.18 955.18 973.18" y="1429" font-family="Liberation Sans" font-size="32" font-weight="normal" fill="#80ff00" stroke="#80ff00" stroke-width="0.6">jpg</text>
<text x="1163.62 1181.62 1190.62 1208.62 1235.62" y="1429" font-family="Liberation Sans" font-size="32" font-weight="normal" fill="#80ff00" stroke="#80ff00" stroke-width="0.6">4.32M</text>
<text x="1374.09 1392.09 1410.09 1428.09 1446.09 1457.09 1475.09 1493.09 1504.09 1522.09 1549.09 1567.09 1585.09 1594.09 1612.09 1630.09 1639.09 1657.09" y="1429" font-family="Liberation Sans" font-size="32" font-weight="normal" fill="#80ff00" stroke="#80ff00" stroke-width="0.6">2016-03-1521:40:26</text>
<text x="1729.58 1740.58 1758.58 1769.58" y="1429" font-family="Liberation Sans" font-size="32" font-weight="normal" fill="#80ff00" stroke="#80ff00" stroke-width="0.6">-a--</text>
<g transform="translate(20,1454.5)"><path d="M-10 -13.5 H4 L10 -7.5 V13.5 H-10 Z" fill="#f4f4f4"/><path d="M4 -13.5 V-7.5 H10" fill="#d8d8d8"/><rect x="-6.5" y="-6" width="13.5" height="14" rx="1.5" fill="#2a6ad8"/><path d="M-6.5 6 L-1 0 L7 7 V8 H-6.5 Z" fill="#4ab0f0"/><circle cx="3.5" cy="-3" r="1.6" fill="#fff"/></g>
<text x="38.5 56.5" y="1466" font-family="Liberation Sans" font-size="32" font-weight="normal" fill="#80ff00" stroke="#80ff00" stroke-width="0.6">24</text>
<text x="948.18 955.18 973.18" y="1466" font-family="Liberation Sans" font-size="32" font-weight="normal" fill="#80ff00" stroke="#80ff00" stroke-width="0.6">jpg</text>
<text x="1163.62 1181.62 1190.62 1208.62 1235.62" y="1466" font-family="Liberation Sans" font-size="32" font-weight="normal" fill="#80ff00" stroke="#80ff00" stroke-width="0.6">5.35M</text>
<text x="1374.09 1392.09 1410.09 1428.09 1446.09 1457.09 1475.09 1493.09 1504.09 1522.09 1549.09 1567.09 1585.09 1594.09 1612.09 1630.09 1639.09 1657.09" y="1466" font-family="Liberation Sans" font-size="32" font-weight="normal" fill="#80ff00" stroke="#80ff00" stroke-width="0.6">2016-03-1521:40:24</text>
<text x="1729.58 1740.58 1758.58 1769.58" y="1466" font-family="Liberation Sans" font-size="32" font-weight="normal" fill="#80ff00" stroke="#80ff00" stroke-width="0.6">-a--</text>
<g transform="translate(20,1491.5)"><path d="M-10 -13.5 H4 L10 -7.5 V13.5 H-10 Z" fill="#f4f4f4"/><path d="M4 -13.5 V-7.5 H10" fill="#d8d8d8"/><rect x="-6.5" y="-6" width="13.5" height="14" rx="1.5" fill="#2a6ad8"/><path d="M-6.5 6 L-1 0 L7 7 V8 H-6.5 Z" fill="#4ab0f0"/><circle cx="3.5" cy="-3" r="1.6" fill="#fff"/></g>
<text x="38.5 56.5" y="1503" font-family="Liberation Sans" font-size="32" font-weight="normal" fill="#80ff00" stroke="#80ff00" stroke-width="0.6">25</text>
<text x="948.18 955.18 973.18" y="1503" font-family="Liberation Sans" font-size="32" font-weight="normal" fill="#80ff00" stroke="#80ff00" stroke-width="0.6">jpg</text>
<text x="1163.62 1181.62 1190.62 1208.62 1235.62" y="1503" font-family="Liberation Sans" font-size="32" font-weight="normal" fill="#80ff00" stroke="#80ff00" stroke-width="0.6">3.70M</text>
<text x="1374.09 1392.09 1410.09 1428.09 1446.09 1457.09 1475.09 1493.09 1504.09 1522.09 1549.09 1567.09 1585.09 1594.09 1612.09 1630.09 1639.09 1657.09" y="1503" font-family="Liberation Sans" font-size="32" font-weight="normal" fill="#80ff00" stroke="#80ff00" stroke-width="0.6">2016-03-1521:40:32</text>
<text x="1729.58 1740.58 1758.58 1769.58" y="1503" font-family="Liberation Sans" font-size="32" font-weight="normal" fill="#80ff00" stroke="#80ff00" stroke-width="0.6">-a--</text>
<g transform="translate(20,1528.5)"><path d="M-10 -13.5 H4 L10 -7.5 V13.5 H-10 Z" fill="#f4f4f4"/><path d="M4 -13.5 V-7.5 H10" fill="#d8d8d8"/><rect x="-6.5" y="-6" width="13.5" height="14" rx="1.5" fill="#2a6ad8"/><path d="M-6.5 6 L-1 0 L7 7 V8 H-6.5 Z" fill="#4ab0f0"/><circle cx="3.5" cy="-3" r="1.6" fill="#fff"/></g>
<text x="38.5 56.5" y="1540" font-family="Liberation Sans" font-size="32" font-weight="normal" fill="#80ff00" stroke="#80ff00" stroke-width="0.6">26</text>
<text x="948.18 955.18 973.18" y="1540" font-family="Liberation Sans" font-size="32" font-weight="normal" fill="#80ff00" stroke="#80ff00" stroke-width="0.6">jpg</text>
<text x="1163.62 1181.62 1190.62 1208.62 1235.62" y="1540" font-family="Liberation Sans" font-size="32" font-weight="normal" fill="#80ff00" stroke="#80ff00" stroke-width="0.6">3.57M</text>
<text x="1374.09 1392.09 1410.09 1428.09 1446.09 1457.09 1475.09 1493.09 1504.09 1522.09 1549.09 1567.09 1585.09 1594.09 1612.09 1630.09 1639.09 1657.09" y="1540" font-family="Liberation Sans" font-size="32" font-weight="normal" fill="#80ff00" stroke="#80ff00" stroke-width="0.6">2016-03-1521:40:34</text>
<text x="1729.58 1740.58 1758.58 1769.58" y="1540" font-family="Liberation Sans" font-size="32" font-weight="normal" fill="#80ff00" stroke="#80ff00" stroke-width="0.6">-a--</text>
<g transform="translate(20,1565.5)"><path d="M-10 -13.5 H4 L10 -7.5 V13.5 H-10 Z" fill="#f4f4f4"/><path d="M4 -13.5 V-7.5 H10" fill="#d8d8d8"/><rect x="-6.5" y="-6" width="13.5" height="14" rx="1.5" fill="#2a6ad8"/><path d="M-6.5 6 L-1 0 L7 7 V8 H-6.5 Z" fill="#4ab0f0"/><circle cx="3.5" cy="-3" r="1.6" fill="#fff"/></g>
<text x="38.5 56.5" y="1577" font-family="Liberation Sans" font-size="32" font-weight="normal" fill="#80ff00" stroke="#80ff00" stroke-width="0.6">27</text>
<text x="948.18 955.18 973.18" y="1577" font-family="Liberation Sans" font-size="32" font-weight="normal" fill="#80ff00" stroke="#80ff00" stroke-width="0.6">jpg</text>
<text x="1163.62 1181.62 1190.62 1208.62 1235.62" y="1577" font-family="Liberation Sans" font-size="32" font-weight="normal" fill="#80ff00" stroke="#80ff00" stroke-width="0.6">4.52M</text>
<text x="1374.09 1392.09 1410.09 1428.09 1446.09 1457.09 1475.09 1493.09 1504.09 1522.09 1549.09 1567.09 1585.09 1594.09 1612.09 1630.09 1639.09 1657.09" y="1577" font-family="Liberation Sans" font-size="32" font-weight="normal" fill="#80ff00" stroke="#80ff00" stroke-width="0.6">2014-11-1817:15:02</text>
<text x="1729.58 1740.58 1758.58 1769.58" y="1577" font-family="Liberation Sans" font-size="32" font-weight="normal" fill="#80ff00" stroke="#80ff00" stroke-width="0.6">-a--</text>
<g transform="translate(20,1602.5)"><path d="M-10 -13.5 H4 L10 -7.5 V13.5 H-10 Z" fill="#f4f4f4"/><path d="M4 -13.5 V-7.5 H10" fill="#d8d8d8"/><rect x="-6.5" y="-6" width="13.5" height="14" rx="1.5" fill="#2a6ad8"/><path d="M-6.5 6 L-1 0 L7 7 V8 H-6.5 Z" fill="#4ab0f0"/><circle cx="3.5" cy="-3" r="1.6" fill="#fff"/></g>
<text x="38.5 56.5" y="1614" font-family="Liberation Sans" font-size="32" font-weight="normal" fill="#80ff00" stroke="#80ff00" stroke-width="0.6">28</text>
<text x="948.18 955.18 973.18" y="1614" font-family="Liberation Sans" font-size="32" font-weight="normal" fill="#80ff00" stroke="#80ff00" stroke-width="0.6">jpg</text>
<text x="1163.62 1181.62 1190.62 1208.62 1235.62" y="1614" font-family="Liberation Sans" font-size="32" font-weight="normal" fill="#80ff00" stroke="#80ff00" stroke-width="0.6">3.53M</text>
<text x="1374.09 1392.09 1410.09 1428.09 1446.09 1457.09 1475.09 1493.09 1504.09 1522.09 1549.09 1567.09 1585.09 1594.09 1612.09 1630.09 1639.09 1657.09" y="1614" font-family="Liberation Sans" font-size="32" font-weight="normal" fill="#80ff00" stroke="#80ff00" stroke-width="0.6">2016-01-1213:57:26</text>
<text x="1729.58 1740.58 1758.58 1769.58" y="1614" font-family="Liberation Sans" font-size="32" font-weight="normal" fill="#80ff00" stroke="#80ff00" stroke-width="0.6">-a--</text>
<g transform="translate(20,1639.5)"><path d="M-10 -13.5 H4 L10 -7.5 V13.5 H-10 Z" fill="#f4f4f4"/><path d="M4 -13.5 V-7.5 H10" fill="#d8d8d8"/><rect x="-6.5" y="-6" width="13.5" height="14" rx="1.5" fill="#2a6ad8"/><path d="M-6.5 6 L-1 0 L7 7 V8 H-6.5 Z" fill="#4ab0f0"/><circle cx="3.5" cy="-3" r="1.6" fill="#fff"/></g>
<text x="38.5 56.5" y="1651" font-family="Liberation Sans" font-size="32" font-weight="normal" fill="#80ff00" stroke="#80ff00" stroke-width="0.6">29</text>
<text x="948.18 955.18 973.18" y="1651" font-family="Liberation Sans" font-size="32" font-weight="normal" fill="#80ff00" stroke="#80ff00" stroke-width="0.6">jpg</text>
<text x="1163.62 1181.62 1190.62 1208.62 1235.62" y="1651" font-family="Liberation Sans" font-size="32" font-weight="normal" fill="#80ff00" stroke="#80ff00" stroke-width="0.6">3.88M</text>
<text x="1374.09 1392.09 1410.09 1428.09 1446.09 1457.09 1475.09 1493.09 1504.09 1522.09 1549.09 1567.09 1585.09 1594.09 1612.09 1630.09 1639.09 1657.09" y="1651" font-family="Liberation Sans" font-size="32" font-weight="normal" fill="#80ff00" stroke="#80ff00" stroke-width="0.6">2015-02-1610:57:58</text>
<text x="1729.58 1740.58 1758.58 1769.58" y="1651" font-family="Liberation Sans" font-size="32" font-weight="normal" fill="#80ff00" stroke="#80ff00" stroke-width="0.6">-a--</text>
<g transform="translate(20,1676.5)"><path d="M-10 -13.5 H4 L10 -7.5 V13.5 H-10 Z" fill="#f4f4f4"/><path d="M4 -13.5 V-7.5 H10" fill="#d8d8d8"/><rect x="-6.5" y="-6" width="13.5" height="14" rx="1.5" fill="#2a6ad8"/><path d="M-6.5 6 L-1 0 L7 7 V8 H-6.5 Z" fill="#4ab0f0"/><circle cx="3.5" cy="-3" r="1.6" fill="#fff"/></g>
<text x="38.5 56.5" y="1688" font-family="Liberation Sans" font-size="32" font-weight="normal" fill="#80ff00" stroke="#80ff00" stroke-width="0.6">30</text>
<text x="948.18 955.18 973.18" y="1688" font-family="Liberation Sans" font-size="32" font-weight="normal" fill="#80ff00" stroke="#80ff00" stroke-width="0.6">jpg</text>
<text x="1163.62 1181.62 1190.62 1208.62 1235.62" y="1688" font-family="Liberation Sans" font-size="32" font-weight="normal" fill="#80ff00" stroke="#80ff00" stroke-width="0.6">3.86M</text>
<text x="1374.09 1392.09 1410.09 1428.09 1446.09 1457.09 1475.09 1493.09 1504.09 1522.09 1549.09 1567.09 1585.09 1594.09 1612.09 1630.09 1639.09 1657.09" y="1688" font-family="Liberation Sans" font-size="32" font-weight="normal" fill="#80ff00" stroke="#80ff00" stroke-width="0.6">2016-08-0620:27:46</text>
<text x="1729.58 1740.58 1758.58 1769.58" y="1688" font-family="Liberation Sans" font-size="32" font-weight="normal" fill="#80ff00" stroke="#80ff00" stroke-width="0.6">-a--</text>
<g transform="translate(20,1713.5)"><path d="M-10 -13.5 H4 L10 -7.5 V13.5 H-10 Z" fill="#f4f4f4"/><path d="M4 -13.5 V-7.5 H10" fill="#d8d8d8"/><rect x="-6.5" y="-6" width="13.5" height="14" rx="1.5" fill="#2a6ad8"/><path d="M-6.5 6 L-1 0 L7 7 V8 H-6.5 Z" fill="#4ab0f0"/><circle cx="3.5" cy="-3" r="1.6" fill="#fff"/></g>
<text x="38.5 56.5" y="1725" font-family="Liberation Sans" font-size="32" font-weight="normal" fill="#80ff00" stroke="#80ff00" stroke-width="0.6">31</text>
<text x="948.18 955.18 973.18" y="1725" font-family="Liberation Sans" font-size="32" font-weight="normal" fill="#80ff00" stroke="#80ff00" stroke-width="0.6">jpg</text>
<text x="1163.62 1181.62 1190.62 1208.62 1235.62" y="1725" font-family="Liberation Sans" font-size="32" font-weight="normal" fill="#80ff00" stroke="#80ff00" stroke-width="0.6">3.84M</text>
<text x="1374.09 1392.09 1410.09 1428.09 1446.09 1457.09 1475.09 1493.09 1504.09 1522.09 1549.09 1567.09 1585.09 1594.09 1612.09 1630.09 1639.09 1657.09" y="1725" font-family="Liberation Sans" font-size="32" font-weight="normal" fill="#80ff00" stroke="#80ff00" stroke-width="0.6">2016-08-0620:26:18</text>
<text x="1729.58 1740.58 1758.58 1769.58" y="1725" font-family="Liberation Sans" font-size="32" font-weight="normal" fill="#80ff00" stroke="#80ff00" stroke-width="0.6">-a--</text>
<g transform="translate(20,1750.5)"><path d="M-10 -13.5 H4 L10 -7.5 V13.5 H-10 Z" fill="#f4f4f4"/><path d="M4 -13.5 V-7.5 H10" fill="#d8d8d8"/><rect x="-6.5" y="-6" width="13.5" height="14" rx="1.5" fill="#2a6ad8"/><path d="M-6.5 6 L-1 0 L7 7 V8 H-6.5 Z" fill="#4ab0f0"/><circle cx="3.5" cy="-3" r="1.6" fill="#fff"/></g>
<text x="38.5 56.5" y="1762" font-family="Liberation Sans" font-size="32" font-weight="normal" fill="#80ff00" stroke="#80ff00" stroke-width="0.6">32</text>
<text x="948.18 955.18 973.18" y="1762" font-family="Liberation Sans" font-size="32" font-weight="normal" fill="#80ff00" stroke="#80ff00" stroke-width="0.6">jpg</text>
<text x="1163.62 1181.62 1190.62 1208.62 1235.62" y="1762" font-family="Liberation Sans" font-size="32" font-weight="normal" fill="#80ff00" stroke="#80ff00" stroke-width="0.6">3.02M</text>
<text x="1374.09 1392.09 1410.09 1428.09 1446.09 1457.09 1475.09 1493.09 1504.09 1522.09 1549.09 1567.09 1585.09 1594.09 1612.09 1630.09 1639.09 1657.09" y="1762" font-family="Liberation Sans" font-size="32" font-weight="normal" fill="#80ff00" stroke="#80ff00" stroke-width="0.6">2016-03-1521:40:26</text>
<text x="1729.58 1740.58 1758.58 1769.58" y="1762" font-family="Liberation Sans" font-size="32" font-weight="normal" fill="#80ff00" stroke="#80ff00" stroke-width="0.6">-a--</text>
<g transform="translate(20,1787.5)"><path d="M-10 -13.5 H4 L10 -7.5 V13.5 H-10 Z" fill="#f4f4f4"/><path d="M4 -13.5 V-7.5 H10" fill="#d8d8d8"/><rect x="-6.5" y="-6" width="13.5" height="14" rx="1.5" fill="#2a6ad8"/><path d="M-6.5 6 L-1 0 L7 7 V8 H-6.5 Z" fill="#4ab0f0"/><circle cx="3.5" cy="-3" r="1.6" fill="#fff"/></g>
<text x="38.5 56.5" y="1799" font-family="Liberation Sans" font-size="32" font-weight="normal" fill="#80ff00" stroke="#80ff00" stroke-width="0.6">33</text>
<text x="948.18 955.18 973.18" y="1799" font-family="Liberation Sans" font-size="32" font-weight="normal" fill="#80ff00" stroke="#80ff00" stroke-width="0.6">jpg</text>
<text x="1163.62 1181.62 1190.62 1208.62 1235.62" y="1799" font-family="Liberation Sans" font-size="32" font-weight="normal" fill="#80ff00" stroke="#80ff00" stroke-width="0.6">3.71M</text>
<text x="1374.09 1392.09 1410.09 1428.09 1446.09 1457.09 1475.09 1493.09 1504.09 1522.09 1549.09 1567.09 1585.09 1594.09 1612.09 1630.09 1639.09 1657.09" y="1799" font-family="Liberation Sans" font-size="32" font-weight="normal" fill="#80ff00" stroke="#80ff00" stroke-width="0.6">2016-03-1521:40:24</text>
<text x="1729.58 1740.58 1758.58 1769.58" y="1799" font-family="Liberation Sans" font-size="32" font-weight="normal" fill="#80ff00" stroke="#80ff00" stroke-width="0.6">-a--</text>
<g transform="translate(20,1824.5)"><path d="M-10 -13.5 H4 L10 -7.5 V13.5 H-10 Z" fill="#f4f4f4"/><path d="M4 -13.5 V-7.5 H10" fill="#d8d8d8"/><rect x="-6.5" y="-6" width="13.5" height="14" rx="1.5" fill="#2a6ad8"/><path d="M-6.5 6 L-1 0 L7 7 V8 H-6.5 Z" fill="#4ab0f0"/><circle cx="3.5" cy="-3" r="1.6" fill="#fff"/></g>
<text x="38.5 56.5" y="1836" font-family="Liberation Sans" font-size="32" font-weight="normal" fill="#80ff00" stroke="#80ff00" stroke-width="0.6">34</text>
<text x="948.18 955.18 973.18" y="1836" font-family="Liberation Sans" font-size="32" font-weight="normal" fill="#80ff00" stroke="#80ff00" stroke-width="0.6">jpg</text>
<text x="1163.62 1181.62 1190.62 1208.62 1235.62" y="1836" font-family="Liberation Sans" font-size="32" font-weight="normal" fill="#80ff00" stroke="#80ff00" stroke-width="0.6">4.18M</text>
<text x="1374.09 1392.09 1410.09 1428.09 1446.09 1457.09 1475.09 1493.09 1504.09 1522.09 1549.09 1567.09 1585.09 1594.09 1612.09 1630.09 1639.09 1657.09" y="1836" font-family="Liberation Sans" font-size="32" font-weight="normal" fill="#80ff00" stroke="#80ff00" stroke-width="0.6">2016-03-1521:40:24</text>
<text x="1729.58 1740.58 1758.58 1769.58" y="1836" font-family="Liberation Sans" font-size="32" font-weight="normal" fill="#80ff00" stroke="#80ff00" stroke-width="0.6">-a--</text>
<g transform="translate(20,1861.5)"><path d="M-10 -13.5 H4 L10 -7.5 V13.5 H-10 Z" fill="#f4f4f4"/><path d="M4 -13.5 V-7.5 H10" fill="#d8d8d8"/><rect x="-6.5" y="-6" width="13.5" height="14" rx="1.5" fill="#2a6ad8"/><path d="M-6.5 6 L-1 0 L7 7 V8 H-6.5 Z" fill="#4ab0f0"/><circle cx="3.5" cy="-3" r="1.6" fill="#fff"/></g>
<text x="38.5 56.5" y="1873" font-family="Liberation Sans" font-size="32" font-weight="normal" fill="#80ff00" stroke="#80ff00" stroke-width="0.6">35</text>
<text x="948.18 955.18 973.18" y="1873" font-family="Liberation Sans" font-size="32" font-weight="normal" fill="#80ff00" stroke="#80ff00" stroke-width="0.6">jpg</text>
<text x="1163.62 1181.62 1190.62 1208.62 1235.62" y="1873" font-family="Liberation Sans" font-size="32" font-weight="normal" fill="#80ff00" stroke="#80ff00" stroke-width="0.6">3.08M</text>
<text x="1374.09 1392.09 1410.09 1428.09 1446.09 1457.09 1475.09 1493.09 1504.09 1522.09 1549.09 1567.09 1585.09 1594.09 1612.09 1630.09 1639.09 1657.09" y="1873" font-family="Liberation Sans" font-size="32" font-weight="normal" fill="#80ff00" stroke="#80ff00" stroke-width="0.6">2016-03-1521:40:24</text>
<text x="1729.58 1740.58 1758.58 1769.58" y="1873" font-family="Liberation Sans" font-size="32" font-weight="normal" fill="#80ff00" stroke="#80ff00" stroke-width="0.6">-a--</text>
<g transform="translate(20,1898.5)"><path d="M-10 -13.5 H4 L10 -7.5 V13.5 H-10 Z" fill="#f4f4f4"/><path d="M4 -13.5 V-7.5 H10" fill="#d8d8d8"/><rect x="-6.5" y="-6" width="13.5" height="14" rx="1.5" fill="#2a6ad8"/><path d="M-6.5 6 L-1 0 L7 7 V8 H-6.5 Z" fill="#4ab0f0"/><circle cx="3.5" cy="-3" r="1.6" fill="#fff"/></g>
<text x="38.5 56.5" y="1910" font-family="Liberation Sans" font-size="32" font-weight="normal" fill="#80ff00" stroke="#80ff00" stroke-width="0.6">36</text>
<text x="948.18 955.18 973.18" y="1910" font-family="Liberation Sans" font-size="32" font-weight="normal" fill="#80ff00" stroke="#80ff00" stroke-width="0.6">jpg</text>
<text x="1163.62 1181.62 1190.62 1208.62 1235.62" y="1910" font-family="Liberation Sans" font-size="32" font-weight="normal" fill="#80ff00" stroke="#80ff00" stroke-width="0.6">3.24M</text>
<text x="1374.09 1392.09 1410.09 1428.09 1446.09 1457.09 1475.09 1493.09 1504.09 1522.09 1549.09 1567.09 1585.09 1594.09 1612.09 1630.09 1639.09 1657.09" y="1910" font-family="Liberation Sans" font-size="32" font-weight="normal" fill="#80ff00" stroke="#80ff00" stroke-width="0.6">2016-08-0620:26:06</text>
<text x="1729.58 1740.58 1758.58 1769.58" y="1910" font-family="Liberation Sans" font-size="32" font-weight="normal" fill="#80ff00" stroke="#80ff00" stroke-width="0.6">-a--</text>
<g transform="translate(20,1935.5)"><path d="M-10 -13.5 H4 L10 -7.5 V13.5 H-10 Z" fill="#f4f4f4"/><path d="M4 -13.5 V-7.5 H10" fill="#d8d8d8"/><rect x="-6.5" y="-6" width="13.5" height="14" rx="1.5" fill="#2a6ad8"/><path d="M-6.5 6 L-1 0 L7 7 V8 H-6.5 Z" fill="#4ab0f0"/><circle cx="3.5" cy="-3" r="1.6" fill="#fff"/></g>
<text x="38.5 56.5" y="1947" font-family="Liberation Sans" font-size="32" font-weight="normal" fill="#80ff00" stroke="#80ff00" stroke-width="0.6">37</text>
<text x="948.18 955.18 973.18" y="1947" font-family="Liberation Sans" font-size="32" font-weight="normal" fill="#80ff00" stroke="#80ff00" stroke-width="0.6">jpg</text>
<text x="1163.62 1181.62 1190.62 1208.62 1235.62" y="1947" font-family="Liberation Sans" font-size="32" font-weight="normal" fill="#80ff00" stroke="#80ff00" stroke-width="0.6">3.89M</text>
<text x="1374.09 1392.09 1410.09 1428.09 1446.09 1457.09 1475.09 1493.09 1504.09 1522.09 1549.09 1567.09 1585.09 1594.09 1612.09 1630.09 1639.09 1657.09" y="1947" font-family="Liberation Sans" font-size="32" font-weight="normal" fill="#80ff00" stroke="#80ff00" stroke-width="0.6">2016-08-0620:26:50</text>
<text x="1729.58 1740.58 1758.58 1769.58" y="1947" font-family="Liberation Sans" font-size="32" font-weight="normal" fill="#80ff00" stroke="#80ff00" stroke-width="0.6">-a--</text>
<rect x="1849" y="549" width="44" height="1404" fill="#1a1a1a" />
<rect x="1868" y="592" width="7" height="49" rx="3.5" fill="#8a8a8a"/>
<g transform="translate(1965,567)"><path d="M-14.5 0 L-2 -12 V-6.5 Q11 -7 14 9 Q9 2.5 -2 3.5 V11 Z" fill="url(#upg)" stroke="#0a4a98" stroke-width="0.8"/><path d="M-11 -0.5 L-3 -8.5 V-4.5 Q6 -5 10 2 Q3 -2 -3 -1.5 Z" fill="#b8e4fc" opacity=".45"/></g>
<text x="1981.78 1990.78" y="578" font-family="Liberation Sans" font-size="32" font-weight="normal" fill="#14e6e0" stroke="#14e6e0" stroke-width="0.6">..</text>
<text x="3080.22 3099.22 3122.22 3131.22 3154.22" y="578" font-family="Liberation Sans" font-size="32" font-weight="normal" fill="#14e6e0" stroke="#14e6e0" stroke-width="0.6">&lt;DIR&gt;</text>
<text x="3319.09 3337.09 3355.09 3373.09 3391.09 3402.09 3420.09 3438.09 3449.09 3467.09 3494.09 3512.09 3530.09 3539.09 3557.09 3575.09 3584.09 3602.09" y="578" font-family="Liberation Sans" font-size="32" font-weight="normal" fill="#14e6e0" stroke="#14e6e0" stroke-width="0.6">2025-03-2712:28:19</text>
<text x="3674.58 3685.58 3703.58 3714.58" y="578" font-family="Liberation Sans" font-size="32" font-weight="normal" fill="#14e6e0" stroke="#14e6e0" stroke-width="0.6">-a--</text>
<g transform="translate(1965,604)"><path d="M-14.5 -10.5 H-2 L-0.5 -12.6 H13.5 Q15.7 -12.6 15.7 -10.5 V10.7 Q15.7 12.7 13.7 12.7 H-14 Q-16 12.7 -16 10.7 V-8.5 Q-16 -10.5 -14.5 -10.5 Z" fill="#6a4a12"/><path d="M-14.3 -8.8 H-3.2 L0 -5.5 H14 V11 H-14.3 Z" fill="url(#fldg)"/><path d="M-1 -10.8 H12.5 L14 -9.3 V-5.5 H0 L-2.5 -8.5 Z" fill="#f4e4b4"/><path d="M0 -10.8 H9 L10 -8.5 H-0.5 Z" fill="#fffbe8"/><rect x="8.5" y="-10.8" width="4.5" height="3" fill="#7ab0b0"/></g>
<text x="1983.08 2006.08 2024.08 2031.08" y="615" font-family="Liberation Sans" font-size="32" font-weight="normal" fill="#14e6e0" stroke="#14e6e0" stroke-width="0.6">Dell</text>
<text x="3080.22 3099.22 3122.22 3131.22 3154.22" y="615" font-family="Liberation Sans" font-size="32" font-weight="normal" fill="#14e6e0" stroke="#14e6e0" stroke-width="0.6">&lt;DIR&gt;</text>
<text x="3319.09 3337.09 3355.09 3373.09 3391.09 3402.09 3420.09 3438.09 3449.09 3467.09 3494.09 3512.09 3530.09 3539.09 3557.09 3575.09 3584.09 3602.09" y="615" font-family="Liberation Sans" font-size="32" font-weight="normal" fill="#14e6e0" stroke="#14e6e0" stroke-width="0.6">2025-03-2622:06:03</text>
<text x="3674.58 3685.58 3696.58 3707.58" y="615" font-family="Liberation Sans" font-size="32" font-weight="normal" fill="#14e6e0" stroke="#14e6e0" stroke-width="0.6">----</text>
<g transform="translate(1965,641)"><path d="M-14.5 -10.5 H-2 L-0.5 -12.6 H13.5 Q15.7 -12.6 15.7 -10.5 V10.7 Q15.7 12.7 13.7 12.7 H-14 Q-16 12.7 -16 10.7 V-8.5 Q-16 -10.5 -14.5 -10.5 Z" fill="#6a4a12"/><path d="M-14.3 -8.8 H-3.2 L0 -5.5 H14 V11 H-14.3 Z" fill="url(#fldg)"/><path d="M-1 -10.8 H12.5 L14 -9.3 V-5.5 H0 L-2.5 -8.5 Z" fill="#f4e4b4"/><path d="M0 -10.8 H9 L10 -8.5 H-0.5 Z" fill="#fffbe8"/><rect x="8.5" y="-10.8" width="4.5" height="3" fill="#7ab0b0"/></g>
<text x="1982.75 1991.75 2009.75 2018.75 2036.75" y="652" font-family="Liberation Sans" font-size="32" font-weight="normal" fill="#14e6e0" stroke="#14e6e0" stroke-width="0.6">Intel</text>
<text x="3080.22 3099.22 3122.22 3131.22 3154.22" y="652" font-family="Liberation Sans" font-size="32" font-weight="normal" fill="#14e6e0" stroke="#14e6e0" stroke-width="0.6">&lt;DIR&gt;</text>
<text x="3319.09 3337.09 3355.09 3373.09 3391.09 3402.09 3420.09 3438.09 3449.09 3467.09 3494.09 3512.09 3530.09 3539.09 3557.09 3575.09 3584.09 3602.09" y="652" font-family="Liberation Sans" font-size="32" font-weight="normal" fill="#14e6e0" stroke="#14e6e0" stroke-width="0.6">2025-03-2709:17:55</text>
<text x="3674.58 3685.58 3696.58 3707.58" y="652" font-family="Liberation Sans" font-size="32" font-weight="normal" fill="#14e6e0" stroke="#14e6e0" stroke-width="0.6">----</text>
<g transform="translate(1965,678)"><path d="M-14.5 -10.5 H-2 L-0.5 -12.6 H13.5 Q15.7 -12.6 15.7 -10.5 V10.7 Q15.7 12.7 13.7 12.7 H-14 Q-16 12.7 -16 10.7 V-8.5 Q-16 -10.5 -14.5 -10.5 Z" fill="#6a4a12"/><path d="M-14.3 -8.8 H-3.2 L0 -5.5 H14 V11 H-14.3 Z" fill="url(#fldg)"/><path d="M-1 -10.8 H12.5 L14 -9.3 V-5.5 H0 L-2.5 -8.5 Z" fill="#f4e4b4"/><path d="M0 -10.8 H9 L10 -8.5 H-0.5 Z" fill="#fffbe8"/><rect x="8.5" y="-10.8" width="4.5" height="3" fill="#7ab0b0"/></g>
<text x="1983.08 2004.08 2022.08 2033.08 2042.08 2060.07 2078.07 2096.07" y="689" font-family="Liberation Sans" font-size="32" font-weight="normal" fill="#14e6e0" stroke="#14e6e0" stroke-width="0.6">PerfLogs</text>
<text x="3080.22 3099.22 3122.22 3131.22 3154.22" y="689" font-family="Liberation Sans" font-size="32" font-weight="normal" fill="#14e6e0" stroke="#14e6e0" stroke-width="0.6">&lt;DIR&gt;</text>
<text x="3319.09 3337.09 3355.09 3373.09 3391.09 3402.09 3420.09 3438.09 3449.09 3467.09 3494.09 3512.09 3530.09 3539.09 3557.09 3575.09 3584.09 3602.09" y="689" font-family="Liberation Sans" font-size="32" font-weight="normal" fill="#14e6e0" stroke="#14e6e0" stroke-width="0.6">2024-04-0116:26:06</text>
<text x="3674.58 3685.58 3696.58 3707.58" y="689" font-family="Liberation Sans" font-size="32" font-weight="normal" fill="#14e6e0" stroke="#14e6e0" stroke-width="0.6">----</text>
<g transform="translate(1965,715)"><path d="M-14.5 -10.5 H-2 L-0.5 -12.6 H13.5 Q15.7 -12.6 15.7 -10.5 V10.7 Q15.7 12.7 13.7 12.7 H-14 Q-16 12.7 -16 10.7 V-8.5 Q-16 -10.5 -14.5 -10.5 Z" fill="#6a4a12"/><path d="M-14.3 -8.8 H-3.2 L0 -5.5 H14 V11 H-14.3 Z" fill="url(#fldg)"/><path d="M-1 -10.8 H12.5 L14 -9.3 V-5.5 H0 L-2.5 -8.5 Z" fill="#f4e4b4"/><path d="M0 -10.8 H9 L10 -8.5 H-0.5 Z" fill="#fffbe8"/><rect x="8.5" y="-10.8" width="4.5" height="3" fill="#7ab0b0"/></g>
<text x="1983.08 2004.08 2015.08 2033.08 2051.07 2062.07 2080.07 2116.07 2136.07 2143.07 2150.07 2168.07" y="726" font-family="Liberation Sans" font-size="32" font-weight="normal" fill="#14e6e0" stroke="#14e6e0" stroke-width="0.6">ProgramFiles</text>
<text x="3080.22 3099.22 3122.22 3131.22 3154.22" y="726" font-family="Liberation Sans" font-size="32" font-weight="normal" fill="#14e6e0" stroke="#14e6e0" stroke-width="0.6">&lt;DIR&gt;</text>
<text x="3319.09 3337.09 3355.09 3373.09 3391.09 3402.09 3420.09 3438.09 3449.09 3467.09 3494.09 3512.09 3530.09 3539.09 3557.09 3575.09 3584.09 3602.09" y="726" font-family="Liberation Sans" font-size="32" font-weight="normal" fill="#14e6e0" stroke="#14e6e0" stroke-width="0.6">2025-03-2711:56:27</text>
<text x="3674.58 3685.58 3696.58 3707.58" y="726" font-family="Liberation Sans" font-size="32" font-weight="normal" fill="#14e6e0" stroke="#14e6e0" stroke-width="0.6">----</text>
<g transform="translate(1965,752)"><path d="M-14.5 -10.5 H-2 L-0.5 -12.6 H13.5 Q15.7 -12.6 15.7 -10.5 V10.7 Q15.7 12.7 13.7 12.7 H-14 Q-16 12.7 -16 10.7 V-8.5 Q-16 -10.5 -14.5 -10.5 Z" fill="#6a4a12"/><path d="M-14.3 -8.8 H-3.2 L0 -5.5 H14 V11 H-14.3 Z" fill="url(#fldg)"/><path d="M-1 -10.8 H12.5 L14 -9.3 V-5.5 H0 L-2.5 -8.5 Z" fill="#f4e4b4"/><path d="M0 -10.8 H9 L10 -8.5 H-0.5 Z" fill="#fffbe8"/><rect x="8.5" y="-10.8" width="4.5" height="3" fill="#7ab0b0"/></g>
<text x="1983.08 2004.08 2015.08 2033.08 2051.07 2062.07 2080.07 2116.07 2136.07 2143.07 2150.07 2168.07 2193.07 2204.07 2220.07 2238.07 2256.07" y="763" font-family="Liberation Sans" font-size="32" font-weight="normal" fill="#14e6e0" stroke="#14e6e0" stroke-width="0.6">ProgramFiles(x86)</text>
<text x="3080.22 3099.22 3122.22 3131.22 3154.22" y="763" font-family="Liberation Sans" font-size="32" font-weight="normal" fill="#14e6e0" stroke="#14e6e0" stroke-width="0.6">&lt;DIR&gt;</text>
<text x="3319.09 3337.09 3355.09 3373.09 3391.09 3402.09 3420.09 3438.09 3449.09 3467.09 3494.09 3512.09 3530.09 3539.09 3557.09 3575.09 3584.09 3602.09" y="763" font-family="Liberation Sans" font-size="32" font-weight="normal" fill="#14e6e0" stroke="#14e6e0" stroke-width="0.6">2025-03-2709:44:27</text>
<text x="3673.88 3684.88 3695.88 3706.88" y="763" font-family="Liberation Sans" font-size="32" font-weight="normal" fill="#14e6e0" stroke="#14e6e0" stroke-width="0.6">r---</text>
<g transform="translate(1965,789)"><path d="M-14.5 -10.5 H-2 L-0.5 -12.6 H13.5 Q15.7 -12.6 15.7 -10.5 V10.7 Q15.7 12.7 13.7 12.7 H-14 Q-16 12.7 -16 10.7 V-8.5 Q-16 -10.5 -14.5 -10.5 Z" fill="#6a4a12"/><path d="M-14.3 -8.8 H-3.2 L0 -5.5 H14 V11 H-14.3 Z" fill="url(#fldg)"/><path d="M-1 -10.8 H12.5 L14 -9.3 V-5.5 H0 L-2.5 -8.5 Z" fill="#f4e4b4"/><path d="M0 -10.8 H9 L10 -8.5 H-0.5 Z" fill="#fffbe8"/><rect x="8.5" y="-10.8" width="4.5" height="3" fill="#7ab0b0"/></g>
<text x="1984.98 2004.98 2022.98 2049.98" y="800" font-family="Liberation Sans" font-size="32" font-weight="normal" fill="#14e6e0" stroke="#14e6e0" stroke-width="0.6">Temp</text>
<text x="3080.22 3099.22 3122.22 3131.22 3154.22" y="800" font-family="Liberation Sans" font-size="32" font-weight="normal" fill="#14e6e0" stroke="#14e6e0" stroke-width="0.6">&lt;DIR&gt;</text>
<text x="3319.09 3337.09 3355.09 3373.09 3391.09 3402.09 3420.09 3438.09 3449.09 3467.09 3494.09 3512.09 3530.09 3539.09 3557.09 3575.09 3584.09 3602.09" y="800" font-family="Liberation Sans" font-size="32" font-weight="normal" fill="#14e6e0" stroke="#14e6e0" stroke-width="0.6">2025-03-2712:31:27</text>
<text x="3674.58 3685.58 3696.58 3707.58" y="800" font-family="Liberation Sans" font-size="32" font-weight="normal" fill="#14e6e0" stroke="#14e6e0" stroke-width="0.6">----</text>
<g transform="translate(1965,826)"><path d="M-14.5 -10.5 H-2 L-0.5 -12.6 H13.5 Q15.7 -12.6 15.7 -10.5 V10.7 Q15.7 12.7 13.7 12.7 H-14 Q-16 12.7 -16 10.7 V-8.5 Q-16 -10.5 -14.5 -10.5 Z" fill="#6a4a12"/><path d="M-14.3 -8.8 H-3.2 L0 -5.5 H14 V11 H-14.3 Z" fill="url(#fldg)"/><path d="M-1 -10.8 H12.5 L14 -9.3 V-5.5 H0 L-2.5 -8.5 Z" fill="#f4e4b4"/><path d="M0 -10.8 H9 L10 -8.5 H-0.5 Z" fill="#fffbe8"/><rect x="8.5" y="-10.8" width="4.5" height="3" fill="#7ab0b0"/></g>
<text x="1983.23 2006.23 2022.23 2040.23 2051.23" y="837" font-family="Liberation Sans" font-size="32" font-weight="normal" fill="#14e6e0" stroke="#14e6e0" stroke-width="0.6">Users</text>
<text x="3080.22 3099.22 3122.22 3131.22 3154.22" y="837" font-family="Liberation Sans" font-size="32" font-weight="normal" fill="#14e6e0" stroke="#14e6e0" stroke-width="0.6">&lt;DIR&gt;</text>
<text x="3319.09 3337.09 3355.09 3373.09 3391.09 3402.09 3420.09 3438.09 3449.09 3467.09 3494.09 3512.09 3530.09 3539.09 3557.09 3575.09 3584.09 3602.09" y="837" font-family="Liberation Sans" font-size="32" font-weight="normal" fill="#14e6e0" stroke="#14e6e0" stroke-width="0.6">2025-03-2620:57:22</text>
<text x="3673.88 3684.88 3695.88 3706.88" y="837" font-family="Liberation Sans" font-size="32" font-weight="normal" fill="#14e6e0" stroke="#14e6e0" stroke-width="0.6">r---</text>
<g transform="translate(1965,863)"><path d="M-14.5 -10.5 H-2 L-0.5 -12.6 H13.5 Q15.7 -12.6 15.7 -10.5 V10.7 Q15.7 12.7 13.7 12.7 H-14 Q-16 12.7 -16 10.7 V-8.5 Q-16 -10.5 -14.5 -10.5 Z" fill="#6a4a12"/><path d="M-14.3 -8.8 H-3.2 L0 -5.5 H14 V11 H-14.3 Z" fill="url(#fldg)"/><path d="M-1 -10.8 H12.5 L14 -9.3 V-5.5 H0 L-2.5 -8.5 Z" fill="#f4e4b4"/><path d="M0 -10.8 H9 L10 -8.5 H-0.5 Z" fill="#fffbe8"/><rect x="8.5" y="-10.8" width="4.5" height="3" fill="#7ab0b0"/></g>
<text x="1985.56 2015.56 2022.56 2040.56 2058.56 2076.56 2099.56" y="874" font-family="Liberation Sans" font-size="32" font-weight="normal" fill="#14e6e0" stroke="#14e6e0" stroke-width="0.6">Windows</text>
<text x="3080.22 3099.22 3122.22 3131.22 3154.22" y="874" font-family="Liberation Sans" font-size="32" font-weight="normal" fill="#14e6e0" stroke="#14e6e0" stroke-width="0.6">&lt;DIR&gt;</text>
<text x="3319.09 3337.09 3355.09 3373.09 3391.09 3402.09 3420.09 3438.09 3449.09 3467.09 3494.09 3512.09 3530.09 3539.09 3557.09 3575.09 3584.09 3602.09" y="874" font-family="Liberation Sans" font-size="32" font-weight="normal" fill="#14e6e0" stroke="#14e6e0" stroke-width="0.6">2025-03-2709:18:56</text>
<text x="3674.58 3685.58 3703.58 3714.58" y="874" font-family="Liberation Sans" font-size="32" font-weight="normal" fill="#14e6e0" stroke="#14e6e0" stroke-width="0.6">-a--</text>
<g transform="translate(1965,900)"><path d="M-14.5 -10.5 H-2 L-0.5 -12.6 H13.5 Q15.7 -12.6 15.7 -10.5 V10.7 Q15.7 12.7 13.7 12.7 H-14 Q-16 12.7 -16 10.7 V-8.5 Q-16 -10.5 -14.5 -10.5 Z" fill="#6a4a12"/><path d="M-14.3 -8.8 H-3.2 L0 -5.5 H14 V11 H-14.3 Z" fill="url(#fldg)"/><path d="M-1 -10.8 H12.5 L14 -9.3 V-5.5 H0 L-2.5 -8.5 Z" fill="#f4e4b4"/><path d="M0 -10.8 H9 L10 -8.5 H-0.5 Z" fill="#fffbe8"/><rect x="8.5" y="-10.8" width="4.5" height="3" fill="#7ab0b0"/></g>
<text x="1985.56 2015.56 2022.56 2040.56 2058.56 2076.56 2099.56 2115.56 2124.56 2142.56 2149.56" y="911" font-family="Liberation Sans" font-size="32" font-weight="normal" fill="#14e6e0" stroke="#14e6e0" stroke-width="0.6">Windows.old</text>
<text x="3080.22 3099.22 3122.22 3131.22 3154.22" y="911" font-family="Liberation Sans" font-size="32" font-weight="normal" fill="#14e6e0" stroke="#14e6e0" stroke-width="0.6">&lt;DIR&gt;</text>
<text x="3319.09 3337.09 3355.09 3373.09 3391.09 3402.09 3420.09 3438.09 3449.09 3467.09 3494.09 3512.09 3530.09 3539.09 3557.09 3575.09 3584.09 3602.09" y="911" font-family="Liberation Sans" font-size="32" font-weight="normal" fill="#14e6e0" stroke="#14e6e0" stroke-width="0.6">2024-04-0116:57:00</text>
<text x="3674.58 3685.58 3696.58 3707.58" y="911" font-family="Liberation Sans" font-size="32" font-weight="normal" fill="#14e6e0" stroke="#14e6e0" stroke-width="0.6">----</text>
<g transform="translate(1965,937)"><path d="M-14.5 -10.5 H-2 L-0.5 -12.6 H13.5 Q15.7 -12.6 15.7 -10.5 V10.7 Q15.7 12.7 13.7 12.7 H-14 Q-16 12.7 -16 10.7 V-8.5 Q-16 -10.5 -14.5 -10.5 Z" fill="#6a4a12"/><path d="M-14.3 -8.8 H-3.2 L0 -5.5 H14 V11 H-14.3 Z" fill="url(#fldg)"/><path d="M-1 -10.8 H12.5 L14 -9.3 V-5.5 H0 L-2.5 -8.5 Z" fill="#f4e4b4"/><path d="M0 -10.8 H9 L10 -8.5 H-0.5 Z" fill="#fffbe8"/><rect x="8.5" y="-10.8" width="4.5" height="3" fill="#7ab0b0"/></g>
<text x="1984.98 2005.98 2023.98 2041.98 2057.98 2082.98 2100.98 2127.98 2145.98" y="948" font-family="Liberation Sans" font-size="32" font-weight="normal" fill="#14e6e0" stroke="#14e6e0" stroke-width="0.6">XboxGames</text>
<text x="3080.22 3099.22 3122.22 3131.22 3154.22" y="948" font-family="Liberation Sans" font-size="32" font-weight="normal" fill="#14e6e0" stroke="#14e6e0" stroke-width="0.6">&lt;DIR&gt;</text>
<text x="3319.09 3337.09 3355.09 3373.09 3391.09 3402.09 3420.09 3438.09 3449.09 3467.09 3494.09 3512.09 3530.09 3539.09 3557.09 3575.09 3584.09 3602.09" y="948" font-family="Liberation Sans" font-size="32" font-weight="normal" fill="#14e6e0" stroke="#14e6e0" stroke-width="0.6">2025-03-2709:21:33</text>
<text x="3674.58 3685.58 3696.58 3707.58" y="948" font-family="Liberation Sans" font-size="32" font-weight="normal" fill="#14e6e0" stroke="#14e6e0" stroke-width="0.6">----</text>
<g transform="translate(1920,433.0)"><rect x="-15" y="-14" width="30" height="22" fill="#e8e8e8"/><rect x="-12.5" y="-11.5" width="25" height="17" fill="#3a90e0"/><rect x="-4" y="8" width="8" height="5" fill="#bbb"/><rect x="-6" y="12" width="12" height="2" fill="#999"/></g>
<g transform="translate(1920,529.4)"><rect x="-5" y="-15" width="10" height="13" rx="1" fill="#3aa0e0"/><rect x="-14" y="-3" width="13" height="14" rx="1" fill="#e02020"/><rect x="1" y="0" width="13" height="14" rx="1" fill="#5ac02a"/></g>
<g transform="translate(1920,625.8)"><rect x="-14" y="-14" width="20" height="16" fill="#e0e0e0"/><rect x="-12" y="-12" width="16" height="12" fill="#3a90e0"/><rect x="6" y="-15" width="9" height="18" fill="#c8c8c8"/><ellipse cx="0" cy="9" rx="15" ry="6" fill="#e8eef8"/><circle cx="-3" cy="5" r="6" fill="#e8eef8"/></g>
<g transform="translate(1920,722.2)"><circle r="16" fill="#d9272e"/><path d="M-8 7 V-7 L0 2 L8 -7 V7" fill="none" stroke="#fff" stroke-width="3.5"/></g>
<g transform="translate(1920,818.6)"><rect x="-15" y="-14.5" width="30" height="29" rx="1" fill="#222"/><rect x="-13" y="-12" width="26" height="20" fill="#4a4a60"/><rect x="-13" y="-2" width="26" height="10" fill="#c8c8d0"/><rect x="-12" y="-9" width="3" height="3" fill="#e84a8a"/><rect x="-12" y="2" width="3" height="3" fill="#f07030"/><rect x="-7" y="-9" width="3" height="3" fill="#f0c030"/><rect x="-7" y="2" width="3" height="3" fill="#6ad04a"/><rect x="-2" y="-9" width="3" height="3" fill="#3ac0f0"/><rect x="-2" y="2" width="3" height="3" fill="#3ac0f0"/><rect x="3" y="-9" width="3" height="3" fill="#6ad04a"/><rect x="3" y="2" width="3" height="3" fill="#f0c030"/><rect x="8" y="-9" width="3" height="3" fill="#f07030"/><rect x="8" y="2" width="3" height="3" fill="#e84a8a"/></g>
<g transform="translate(1920,915.0)"><rect x="-14" y="-14" width="26" height="28" rx="2" fill="#1a7a9a"/><rect x="-9" y="-14" width="16" height="10" fill="#e8f0f0"/><rect x="-10" y="3" width="18" height="11" fill="#dde"/><rect x="-6" y="6" width="5" height="6" fill="#1a7a9a"/><rect x="8" y="8" width="9" height="9" fill="#fff"/><path d="M9.5 10.5 h6 l-3 4 z" fill="#000"/></g>
<g transform="translate(1920,1011.4000000000001)"><rect x="-14" y="-14" width="26" height="28" rx="2" fill="#2a6ae0"/><rect x="-9" y="-14" width="16" height="10" fill="#e8f0f0"/><rect x="-10" y="3" width="18" height="11" fill="#dde"/><rect x="-6" y="6" width="5" height="6" fill="#2a6ae0"/><rect x="8" y="8" width="9" height="9" fill="#fff"/><path d="M9.5 10.5 h6 l-3 4 z" fill="#000"/></g>
<g transform="translate(1920,1107.8000000000002)"><rect x="-2.2" y="-17" width="4.4" height="9" rx="2.2" fill="#f08a12" transform="rotate(-60 0 2)"/><rect x="-2.2" y="-17" width="4.4" height="9" rx="2.2" fill="#f08a12" transform="rotate(-30 0 2)"/><rect x="-2.2" y="-17" width="4.4" height="9" rx="2.2" fill="#f08a12" transform="rotate(0 0 2)"/><rect x="-2.2" y="-17" width="4.4" height="9" rx="2.2" fill="#f08a12" transform="rotate(30 0 2)"/><rect x="-2.2" y="-17" width="4.4" height="9" rx="2.2" fill="#f08a12" transform="rotate(60 0 2)"/><path d="M-16 3 Q0 -12 16 3 Q0 18 -16 3 Z" fill="#f29a1a" stroke="#c86a08" stroke-width="1"/><circle cx="0" cy="3" r="7.5" fill="#e23a18"/><path d="M-4 3 A4 4 0 1 1 0 7 A2.5 2.5 0 1 1 2 3" fill="none" stroke="#f6b040" stroke-width="1.6"/></g>
<g transform="translate(1920,1204.2)"><path d="M6.50 -0.15 L0.00 -15.00 A15 15 0 0 1 12.99 -7.50 Z" fill="#f0a020"/><path d="M3.38 5.55 L12.99 -7.50 A15 15 0 0 1 12.99 7.50 Z" fill="#e02a6a"/><path d="M-3.12 5.70 L12.99 7.50 A15 15 0 0 1 0.00 15.00 Z" fill="#c02ab0"/><path d="M-6.50 0.15 L0.00 15.00 A15 15 0 0 1 -12.99 7.50 Z" fill="#1a9ae8"/><path d="M-3.38 -5.55 L-12.99 7.50 A15 15 0 0 1 -12.99 -7.50 Z" fill="#18b8c8"/><path d="M3.12 -5.70 L-12.99 -7.50 A15 15 0 0 1 -0.00 -15.00 Z" fill="#5ad02a"/><circle r="7.5" fill="#0a0a0a"/></g>
<g transform="translate(1904,1285.6) scale(0.88)"><path d="M5 1.5 Q5.5 0 8 0.3 L31 2.5 Q34.5 3 34.5 6.5 L33.5 31 Q33.3 35 29.5 35.5 L4.5 33.5 Q0.5 33 0.8 29 L2 5 Q2.3 1.5 5 1.5 Z" fill="#2c56c4" stroke="#0e1e58" stroke-width="1.2"/><path d="M4 6 L3 29 Q3 31 5 31.5 L8 32 L9 5 Z" fill="#4a7ae8" opacity=".6"/><path d="M8 3.5 L30.5 5.5 Q32 5.7 31.9 7.5 L31.3 16.5 Q31.2 18 29.5 18 L6.5 16.8 Q5 16.7 5.1 15 L5.7 5.5 Q5.8 3.4 8 3.5 Z" fill="#e6eaf6"/><path d="M10 6 L28 16 M28 6.5 L11 15.5" stroke="#1e78dc" stroke-width="3.2"/><path d="M8.5 11 L14 8.5 L15 13 Z M29.5 11.5 L24 14 L23.5 9 Z" fill="#dc2424"/><path d="M17 7.5 L21.5 7.8 L20 11 L22 14.5 L17.5 14.3 L18.8 11 Z" fill="#f2a020"/><circle cx="19.3" cy="11" r="1.6" fill="#181818"/><path d="M6.5 19.5 L21 20.3 L20.5 34.3 L5.3 33 Z" fill="#dce2f8"/><path d="M8.7 21.5 L13.5 21.8 L13 28.8 L8.2 28.4 Z" fill="#3460d0"/><path d="M22.5 20.4 L26 20.6 L25.6 34.6 L22 34.4 Z" fill="#6a94f2"/></g><circle cx="1929" cy="1309.6" r="6" fill="#e02a2a"/><circle cx="1918" cy="1303.6" r="5" fill="#f0c030"/>
<rect x="2" y="1954" width="1891" height="40" fill="#1a1a1a" />
<rect x="1947" y="1954" width="1892" height="40" fill="#1a1a1a" />
<rect x="1" y="1994" width="1893" height="1" fill="#a0a0a0"/>
<rect x="1" y="1953" width="1" height="42" fill="#a0a0a0"/>
<rect x="1893" y="1953" width="1" height="42" fill="#a0a0a0"/>
<rect x="1946" y="1953" width="1" height="42" fill="#a0a0a0"/>
<rect x="3839" y="1953" width="1" height="42" fill="#a0a0a0"/>
<rect x="1946" y="1994" width="1894" height="1" fill="#a0a0a0"/>
<text x="3.26 11.26" y="1983" font-family="Liberation Sans" font-size="30" font-weight="normal" fill="#fff" stroke="#fff" stroke-width="0.6">..</text>
<text x="1948.66 1956.66" y="1983" font-family="Liberation Sans" font-size="30" font-weight="normal" fill="#fff" stroke="#fff" stroke-width="0.6">..</text>
<rect x="1.5" y="1996.5" width="545" height="41" fill="#1a1a1a" stroke="#9a9a9a" stroke-width="1"/>
<rect x="2.5" y="1997.5" width="543" height="39" fill="none" stroke="#0e0e0e" stroke-width="1"/>
<text x="216 235 261 282 291 308" y="2028" font-family="Liberation Sans" font-size="31" font-weight="bold" fill="#fff">F3View</text>
<rect x="549.5" y="1996.5" width="545" height="41" fill="#1a1a1a" stroke="#9a9a9a" stroke-width="1"/>
<rect x="550.5" y="1997.5" width="543" height="39" fill="none" stroke="#0e0e0e" stroke-width="1"/>
<text x="770 789 815 836 855 864" y="2028" font-family="Liberation Sans" font-size="31" font-weight="bold" fill="#fff">F4Edit</text>
<rect x="1097.5" y="1996.5" width="545" height="41" fill="#1a1a1a" stroke="#9a9a9a" stroke-width="1"/>
<rect x="1098.5" y="1997.5" width="543" height="39" fill="none" stroke="#0e0e0e" stroke-width="1"/>
<text x="1309 1328 1354 1376 1395 1414" y="2028" font-family="Liberation Sans" font-size="31" font-weight="bold" fill="#fff">F5Copy</text>
<rect x="1645.5" y="1996.5" width="545" height="41" fill="#1a1a1a" stroke="#9a9a9a" stroke-width="1"/>
<rect x="1646.5" y="1997.5" width="543" height="39" fill="none" stroke="#0e0e0e" stroke-width="1"/>
<text x="1856 1875 1901 1927 1946 1963" y="2028" font-family="Liberation Sans" font-size="31" font-weight="bold" fill="#fff">F6Move</text>
<rect x="2193.5" y="1996.5" width="545" height="41" fill="#1a1a1a" stroke="#9a9a9a" stroke-width="1"/>
<rect x="2194.5" y="1997.5" width="543" height="39" fill="none" stroke="#0e0e0e" stroke-width="1"/>
<text x="2360 2379 2405 2427 2444 2477 2496 2515 2524 2543 2560" y="2028" font-family="Liberation Sans" font-size="31" font-weight="bold" fill="#fff">F7NewFolder</text>
<rect x="2741.5" y="1996.5" width="545" height="41" fill="#1a1a1a" stroke="#9a9a9a" stroke-width="1"/>
<rect x="2742.5" y="1997.5" width="543" height="39" fill="none" stroke="#0e0e0e" stroke-width="1"/>
<text x="2945.5 2964.5 2990.5 3012.5 3029.5 3038.5 3055.5 3065.5" y="2028" font-family="Liberation Sans" font-size="31" font-weight="bold" fill="#fff">F8Delete</text>
<rect x="3289.5" y="1996.5" width="549" height="41" fill="#1a1a1a" stroke="#9a9a9a" stroke-width="1"/>
<rect x="3290.5" y="1997.5" width="547" height="39" fill="none" stroke="#0e0e0e" stroke-width="1"/>
<text x="3483.5 3505.5 3514.5 3524.5 3542.5 3561.5 3587.5 3608.5 3625.5 3634.5" y="2028" font-family="Liberation Sans" font-size="31" font-weight="bold" fill="#fff">Alt+F4Exit</text>
<rect x="0" y="2038" width="3840" height="3" fill="#0e0e0e" />
<rect x="0" y="2040" width="3840" height="120" fill="url(#taskg)" />
<rect x="0" y="2040" width="3840" height="3" fill="#46433c" />
<defs>
<linearGradient id="wing" x1="0" y1="0" x2="1" y2="1"><stop offset="0" stop-color="#7ae6fd"/><stop offset="1" stop-color="#0a96f6"/></linearGradient>
<linearGradient id="cop1" x1="0" y1="0" x2="0" y2="1"><stop offset="0" stop-color="#22a8f4"/><stop offset=".3" stop-color="#1a90e0"/><stop offset=".55" stop-color="#4ab080"/><stop offset=".8" stop-color="#b8c030"/><stop offset="1" stop-color="#f0c810"/></linearGradient>
<linearGradient id="cop2" x1="0" y1="0" x2="0" y2="1"><stop offset="0" stop-color="#a24ae4"/><stop offset=".45" stop-color="#e8549a"/><stop offset="1" stop-color="#f6a866"/></linearGradient>
<linearGradient id="copb" x1="0" y1="0" x2="0" y2="1"><stop offset="0" stop-color="#1838c0"/><stop offset="1" stop-color="#2a78e8"/></linearGradient>
<linearGradient id="tvw" x1="0" y1="0" x2="1" y2="1"><stop offset="0" stop-color="#fefefe"/><stop offset="1" stop-color="#e6e6e6"/></linearGradient>
<linearGradient id="expg" x1="0" y1="0" x2="1" y2="1"><stop offset="0" stop-color="#ffdc78"/><stop offset="1" stop-color="#f4b000"/></linearGradient>
<linearGradient id="expb" x1="0" y1="0" x2="1" y2="1"><stop offset="0" stop-color="#1a8ae8"/><stop offset="1" stop-color="#0a5cc0"/></linearGradient>
<linearGradient id="edg1" x1="0" y1="0" x2="1" y2="1"><stop offset="0" stop-color="#38b8f8"/><stop offset=".5" stop-color="#2ac0d0"/><stop offset="1" stop-color="#5ad860"/></linearGradient>
<linearGradient id="edg2" x1="0" y1="0" x2="1" y2="1"><stop offset="0" stop-color="#1a8ae0"/><stop offset="1" stop-color="#0a4ea8"/></linearGradient>
<linearGradient id="npg" x1="0" y1="0" x2="1" y2="1"><stop offset="0" stop-color="#88d8f4"/><stop offset="1" stop-color="#3aaed8"/></linearGradient>
</defs>
<rect x="51.8" y="2071.8" width="58.4" height="58.6" rx="3" fill="url(#wing)"/>
<rect x="80" y="2071" width="2" height="60" fill="#25231f"/><rect x="51" y="2100" width="60" height="2" fill="#25231f"/>
<path d="M204 2112 L215.5 2123.5" stroke="#d8dadc" stroke-width="6.5" stroke-linecap="round"/>
<circle cx="189.9" cy="2095.8" r="20" fill="#4a4844" stroke="#e8e8ea" stroke-width="6"/>
<rect x="288.1" y="2072.1" width="45" height="40.6" rx="3" fill="url(#tvw)"/>
<rect x="273" y="2087.6" width="44.8" height="39.7" rx="3" fill="#a0a0a0" fill-opacity=".55"/>
<path d="M391 2080 Q393 2075 400 2075 L418.5 2075 L405 2110 L392 2110 Q385.5 2110 386.5 2103 Z" fill="url(#cop1)"/>
<path d="M415 2075 L423 2075 Q427 2076 428.5 2082 L430 2089 L412 2089 Z" fill="url(#copb)"/>
<path d="M397 2110 L414 2110 L409 2123.5 L405 2123.5 Q401.5 2122 400.5 2117 Z" fill="#f26a3e"/>
<path d="M421.4 2089 L436 2089 Q441.5 2090 440 2097 L433.5 2117.5 Q431.5 2123.5 425 2123.5 L408.8 2123.5 Z" fill="url(#cop2)"/>
<path d="M492.8 2076 Q492.8 2074 495 2074 L510 2074 L516.5 2080 L553 2080 L553 2086 L492.8 2086 Z" fill="#e2a200"/>
<path d="M492.8 2083.3 L514 2083.3 L518 2079.8 L551 2079.8 Q553 2079.8 553 2082 L553 2125.5 Q553 2127.5 551 2127.5 L494.8 2127.5 Q492.8 2127.5 492.8 2125.5 Z" fill="url(#expg)"/>
<path d="M503.3 2127.5 L503.3 2114 Q503.3 2110 507.3 2110 L538.5 2110 Q542.5 2110 542.5 2114 L542.5 2127.5 Z" fill="url(#expb)"/>
<rect x="511" y="2117.4" width="23.7" height="1.8" rx=".9" fill="#0a3e8a"/>
<path d="M603 2098 Q604 2071 632 2069.7 Q660 2070 663 2096 Q664 2112 650 2112 L640 2111 Q638 2107 641 2104 Q641 2093 632 2091 Q620 2092 617 2103 Q613 2126 640 2130 Q608 2132 603 2098 Z" fill="url(#edg1)"/>
<path d="M603.5 2100 Q606 2083 624 2081 Q636 2082 640 2091 Q630 2088 622 2097 Q614 2110 628 2124 Q640 2130 652 2126 Q658 2120 660 2115 Q652 2131 632 2130 Q606 2128 603.5 2100 Z" fill="url(#edg2)"/>
<circle cx="633" cy="2099.6" r="7" fill="#25231f"/>
<circle cx="617.8" cy="2114.7" r="14" fill="#dcdad6"/><circle cx="617.8" cy="2110.5" r="5.8" fill="#9a9694"/><path d="M606 2123 Q617.8 2112 629.6 2123 Q624 2128.5 617.8 2128.5 Q611 2128.5 606 2123 Z" fill="#9a9694"/>
<path d="M721 2076 Q721 2074 723 2074 L763 2074 Q765 2074 765 2076 L765 2122 L721 2122 Z" fill="url(#npg)"/>
<rect x="721" y="2122" width="44" height="3.6" fill="#ece8e4"/><path d="M721 2125.6 L765 2125.6 L765 2128 Q765 2130 763 2130 L723 2130 Q721 2130 721 2128 Z" fill="#b05a12"/>
<rect x="725.1" y="2070" width="5" height="7.5" rx="2.5" fill="#0a7098"/>
<rect x="735.0" y="2070" width="5" height="7.5" rx="2.5" fill="#0a7098"/>
<rect x="746.0" y="2070" width="5" height="7.5" rx="2.5" fill="#0a7098"/>
<rect x="756.1" y="2070" width="5" height="7.5" rx="2.5" fill="#0a7098"/>
<rect x="728.3" y="2087.1" width="29.5" height="3.6" rx="1.8" fill="#0a7098"/>
<rect x="728.3" y="2097.0" width="29.5" height="3.6" rx="1.8" fill="#0a7098"/>
<rect x="728.3" y="2107.1" width="29.5" height="3.6" rx="1.8" fill="#0a7098"/>
<circle cx="852.9" cy="2100" r="30.3" fill="#fff"/>
<g transform="translate(852.8,2100)"><path d="M-4.6 -17 A9.6 9.6 0 0 1 11.5 -13 L11.5 5.5" fill="none" stroke="#000" stroke-width="3" transform="rotate(0)"/><path d="M-4.6 -17 A9.6 9.6 0 0 1 11.5 -13 L11.5 5.5" fill="none" stroke="#000" stroke-width="3" transform="rotate(60)"/><path d="M-4.6 -17 A9.6 9.6 0 0 1 11.5 -13 L11.5 5.5" fill="none" stroke="#000" stroke-width="3" transform="rotate(120)"/><path d="M-4.6 -17 A9.6 9.6 0 0 1 11.5 -13 L11.5 5.5" fill="none" stroke="#000" stroke-width="3" transform="rotate(180)"/><path d="M-4.6 -17 A9.6 9.6 0 0 1 11.5 -13 L11.5 5.5" fill="none" stroke="#000" stroke-width="3" transform="rotate(240)"/><path d="M-4.6 -17 A9.6 9.6 0 0 1 11.5 -13 L11.5 5.5" fill="none" stroke="#000" stroke-width="3" transform="rotate(300)"/></g>
<circle cx="962.8" cy="2099.6" r="28.6" fill="#1ed760"/>
<path d="M944 2090 Q964 2083 983 2094.5" fill="none" stroke="#191414" stroke-width="5.6" stroke-linecap="round"/>
<path d="M946.5 2099 Q963 2093.5 978.5 2102.8" fill="none" stroke="#191414" stroke-width="4.8" stroke-linecap="round"/>
<path d="M947.5 2108.5 Q962 2104 975 2112.3" fill="none" stroke="#191414" stroke-width="4" stroke-linecap="round"/>
<path d="M1099.10 2084.90 A30 30 0 0 0 1047.10 2084.90 L1060.10 2107.40 L1073.1 2099.9 L1073.10 2084.90 Z" fill="#e8453c"/>
<path d="M1099.10 2084.90 A30 30 0 0 1 1073.10 2129.90 L1086.10 2107.40 L1073.1 2099.9 L1073.10 2084.90 Z" fill="#f9bf2a"/>
<path d="M1073.10 2129.90 A30 30 0 0 1 1047.10 2084.90 L1060.10 2107.40 L1073.1 2099.9 L1086.10 2107.40 Z" fill="#2a9a48"/>
<circle cx="1073.1" cy="2099.9" r="15" fill="#fff"/><circle cx="1073.1" cy="2099.9" r="12.1" fill="#3a7ce8"/>
<rect x="1133" y="2050" width="99.4" height="99.3" rx="8" fill="#393630" stroke="#45423c" stroke-width="1"/>
<g transform="translate(1153.4,2072.7) scale(1.58)"><path d="M5 1.5 Q5.5 0 8 0.3 L31 2.5 Q34.5 3 34.5 6.5 L33.5 31 Q33.3 35 29.5 35.5 L4.5 33.5 Q0.5 33 0.8 29 L2 5 Q2.3 1.5 5 1.5 Z" fill="#2c56c4" stroke="#0e1e58" stroke-width="1.2"/><path d="M4 6 L3 29 Q3 31 5 31.5 L8 32 L9 5 Z" fill="#4a7ae8" opacity=".6"/><path d="M8 3.5 L30.5 5.5 Q32 5.7 31.9 7.5 L31.3 16.5 Q31.2 18 29.5 18 L6.5 16.8 Q5 16.7 5.1 15 L5.7 5.5 Q5.8 3.4 8 3.5 Z" fill="#e6eaf6"/><path d="M10 6 L28 16 M28 6.5 L11 15.5" stroke="#1e78dc" stroke-width="3.2"/><path d="M8.5 11 L14 8.5 L15 13 Z M29.5 11.5 L24 14 L23.5 9 Z" fill="#dc2424"/><path d="M17 7.5 L21.5 7.8 L20 11 L22 14.5 L17.5 14.3 L18.8 11 Z" fill="#f2a020"/><circle cx="19.3" cy="11" r="1.6" fill="#181818"/><path d="M6.5 19.5 L21 20.3 L20.5 34.3 L5.3 33 Z" fill="#dce2f8"/><path d="M8.7 21.5 L13.5 21.8 L13 28.8 L8.2 28.4 Z" fill="#3460d0"/><path d="M22.5 20.4 L26 20.6 L25.6 34.6 L22 34.4 Z" fill="#6a94f2"/></g>
<rect x="516" y="2139.2" width="15" height="7.5" rx="3.75" fill="#9a9896"/>
<rect x="626" y="2139.2" width="15" height="7.5" rx="3.75" fill="#9a9896"/>
<rect x="845.5" y="2139.2" width="15.0" height="7.5" rx="3.75" fill="#9a9896"/>
<rect x="956" y="2139.2" width="15" height="7.5" rx="3.75" fill="#9a9896"/>
<rect x="1066" y="2139.2" width="15" height="7.5" rx="3.75" fill="#9a9896"/>
<rect x="1162.9" y="2138.8" width="40.3" height="8" rx="4" fill="#a2d0e6"/>
<defs><linearGradient id="cldg" x1="0" y1="0" x2="0" y2="1"><stop offset="0" stop-color="#b4ccf2"/><stop offset="1" stop-color="#d4e4f8"/></linearGradient></defs><path d="M2800 2113 Q2792 2113 2792.7 2103 Q2794 2091 2806 2090 Q2810 2075 2826 2075 Q2838 2076 2842 2088 Q2853 2090 2853.6 2102 Q2853 2113 2845 2113 Z" fill="url(#cldg)" stroke="#8aa8e0" stroke-width="1"/><circle cx="2840.6" cy="2075.2" r="20" fill="#f29ca6"/><text x="2840.8" y="2085.7" font-family="Liberation Sans" font-size="26.5" fill="#000" text-anchor="middle">8</text>
<text x="2871" y="2089.8" font-family="Liberation Sans" font-size="30" font-weight="normal" fill="#fff" text-anchor="start" textLength="60" lengthAdjust="spacingAndGlyphs" >15°C</text>
<g transform="translate(2872.9,2104)"><rect x="12.2" y="0.8" width="2.2" height="3.5" fill="#e4e0dc"/><rect x="2.1" y="3.7" width="22" height="2.1" fill="#e4e0dc"/><ellipse cx="13.2" cy="13" rx="8.2" ry="4.1" fill="none" stroke="#e4e0dc" stroke-width="2.1"/><rect x="0" y="22" width="26.1" height="2.1" fill="#e4e0dc"/><path d="M31.9 2 H46.8 V8 H32.9 V13.7 H47.8" fill="none" stroke="#e4e0dc" stroke-width="2.1"/><rect x="51.3" y="0" width="2.1" height="16.5" fill="#e4e0dc"/><rect x="35.7" y="19" width="17.4" height="9" fill="none" stroke="#e4e0dc" stroke-width="2.1"/></g>
<path d="M3202 2105.5 L3214.5 2092.5 L3227 2105.5" fill="none" stroke="#fff" stroke-width="2.4"/>
<circle cx="3295" cy="2097" r="11" fill="#9a9a9a"/><circle cx="3284" cy="2102" r="9" fill="#c8c8c8"/><path d="M3276 2109 Q3290 2100 3302 2106 L3302 2112 H3280 Q3275 2112 3276 2109Z" fill="#f0f0f0"/><circle cx="3303.8" cy="2108.7" r="12.5" fill="#2a2520"/><circle cx="3303.8" cy="2108.7" r="11" fill="#5ec4f4"/><rect x="3302.4" y="2105" width="2.8" height="9" fill="#111"/><circle cx="3303.8" cy="2101.8" r="1.7" fill="#111"/>
<path d="M3360 2119.5 L3374.6 2080 L3389.5 2119.5 M3364.5 2109.3 H3385" fill="none" stroke="#fff" stroke-width="2"/>
<g fill="none" stroke="#fff" stroke-width="2.8" stroke-linecap="round"><path d="M3436 2096 A28 28 0 0 1 3474 2096"/><path d="M3442.5 2102 A18 18 0 0 1 3467.5 2102"/><path d="M3449 2107.5 A8.5 8.5 0 0 1 3461 2107.5"/></g><circle cx="3455" cy="2110" r="3.2" fill="#fff"/>
<path d="M3496 2094 H3503 L3512 2086.5 V2113 L3503 2105.5 H3496 Z" fill="none" stroke="#fff" stroke-width="2.6" stroke-linejoin="round"/><path d="M3516.5 2093.5 A8 8 0 0 1 3516.5 2106.5" fill="none" stroke="#fff" stroke-width="2.4"/><path d="M3521.5 2088.5 A15 15 0 0 1 3521.5 2111.5" fill="none" stroke="#6a6a6a" stroke-width="2.2"/><path d="M3526.5 2084 A21 21 0 0 1 3526.5 2116" fill="none" stroke="#5a5a5a" stroke-width="2.2"/>
<rect x="3556.5" y="2087.5" width="34" height="24" rx="5" fill="none" stroke="#fff" stroke-width="2.8"/><rect x="3591" y="2094" width="4" height="11" rx="1.5" fill="#fff"/><path d="M3561 2108 L3568 2093 H3586 V2108 Z" fill="#fff"/><path d="M3568 2080.5 L3560 2094 H3566 L3561 2104" fill="none" stroke="#2a2520" stroke-width="5"/><path d="M3568 2080.5 L3560 2094 H3566 L3561 2104" fill="none" stroke="#fff" stroke-width="2.4"/>
<g transform="translate(3666.8,2064.8)"><ellipse cx="13.6" cy="10.1" rx="8.0" ry="5.5" fill="none" stroke="#fff" stroke-width="3.1"/><rect x="11.9" y="15.5" width="3.4" height="7" fill="#fff"/><rect x="0" y="22.1" width="27.1" height="2.6" fill="#fff"/><rect x="42" y="0" width="3.2" height="4" fill="#fff"/><rect x="33" y="3" width="22.1" height="2.5" fill="#fff"/><ellipse cx="43.6" cy="12.2" rx="7.9" ry="2.9" fill="none" stroke="#fff" stroke-width="2.6"/><rect x="30.1" y="18" width="27" height="2.6" fill="#fff"/><rect x="42.1" y="19" width="3" height="10.3" fill="#fff"/></g>
<text x="3737" y="2091" font-family="Liberation Sans" font-size="31" font-weight="normal" fill="#fff" text-anchor="start" textLength="51" lengthAdjust="spacingAndGlyphs" >1:41</text>
<text x="3634.5" y="2130.8" font-family="Liberation Sans" font-size="31" font-weight="normal" fill="#fff" text-anchor="start" textLength="158" lengthAdjust="spacingAndGlyphs" >2025-03-27</text>
</svg></body></html>
